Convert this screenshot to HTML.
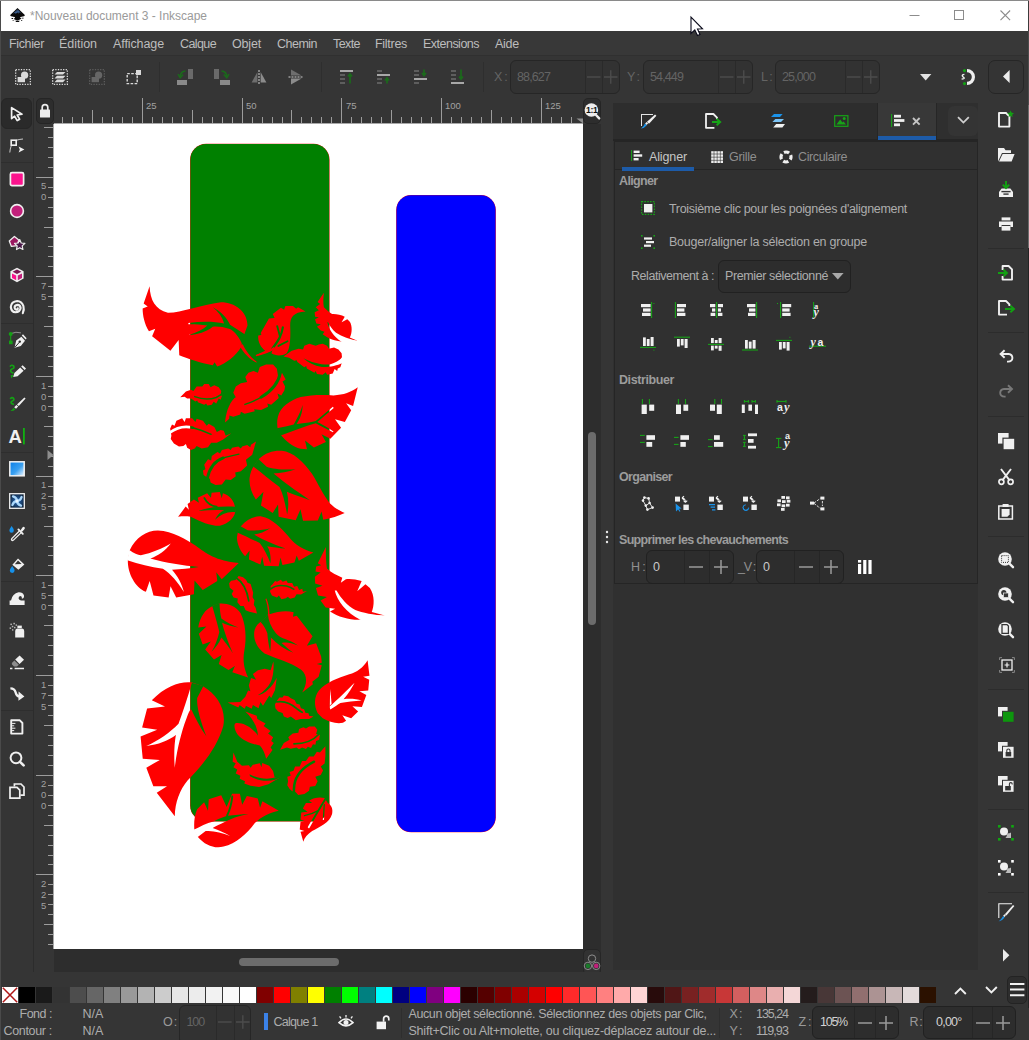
<!DOCTYPE html>
<html lang="fr"><head><meta charset="utf-8"><title>*Nouveau document 3 - Inkscape</title><style>
html,body{margin:0;padding:0}
body{width:1029px;height:1040px;position:relative;overflow:hidden;background:#353535;font-family:"Liberation Sans",sans-serif;font-size:12px;color:#b6b6b6}
.a{position:absolute;box-sizing:border-box}
.t{position:absolute;white-space:nowrap;line-height:16px;height:16px}
svg{overflow:visible}
.sb{border:1px solid #212121;border-radius:5px;background:#2d2d2d}
</style></head><body>
<div class="a" style="left:0px;top:0px;width:1029px;height:31px;background:#ffffff;"></div><div class="a" style="left:0px;top:0px;width:1029px;height:1px;background:#8a8a8a;"></div><div class="a" style="left:0px;top:1px;width:1px;height:1039px;background:#4a4a4a;"></div><svg class="a" style="left:8.5px;top:6.5px;" width="17" height="16" viewBox="0 0 22 21">
<defs><linearGradient id="lg1" x1="0" y1="0" x2="1" y2="1"><stop offset="0" stop-color="#111"/><stop offset=".55" stop-color="#3a5f92"/><stop offset="1" stop-color="#111"/></linearGradient></defs>
<path d="M11 1.2 L20.3 10.2 Q21.2 11.6 19.4 12.2 L15 13 Q13.6 13.6 15 14.6 L16.2 15.4 Q12 17.6 11 17.6 Q9 17.4 6 15.6 L7.4 14.4 Q8.6 13.4 7 13 L2.6 12.2 Q.8 11.6 1.8 10.2 Z" fill="#0b0b0b"/>
<path d="M11 3 L16.5 8.4 L13.5 7.6 L12.4 9 L10.8 7.2 L9 8.8 L7.2 7.8 L5 8.6 Z" fill="url(#lg1)"/>
<path d="M8 18.2 h6 l-1.2 1.5 h-3.6z M3.2 14.6 h2 v1 h-2z M16.6 14.2 h2.4 v.9 h-2.4z M4.4 17 h2.2 v.8 h-2.2z M15.6 17.2 h1.6 v.8 h-1.6z" fill="#0b0b0b"/>
</svg><span class="t" id="t0" style="left:30px;top:7.5px;font-size:12px;color:#9a9a9a;letter-spacing:-0.015px;">*Nouveau document 3 - Inkscape</span><svg class="a" style="left:909px;top:10px;" width="12" height="12" viewBox="0 0 12 12"><path d="M0.5 5.5h10" stroke="#8c8c8c" stroke-width="1"/></svg><svg class="a" style="left:954px;top:10px;" width="12" height="12" viewBox="0 0 12 12"><rect x="0.5" y="0.5" width="9" height="9" fill="none" stroke="#8c8c8c" stroke-width="1"/></svg><svg class="a" style="left:1000px;top:10px;" width="12" height="12" viewBox="0 0 12 12"><path d="M0.5 0.5l9.6 9.6M10.1 0.5l-9.6 9.6" stroke="#8c8c8c" stroke-width="1.1"/></svg><div class="a" style="left:1px;top:31px;width:1028px;height:25px;background:#383838;"></div><div class="a" style="left:1px;top:55px;width:1028px;height:1px;background:#303030;"></div><span class="t" id="t1" style="left:9px;top:35.5px;font-size:12.5px;color:#bdbdbd;letter-spacing:-0.359px;">Fichier</span><span class="t" id="t2" style="left:59px;top:35.5px;font-size:12.5px;color:#bdbdbd;letter-spacing:-0.033px;">Édition</span><span class="t" id="t3" style="left:113px;top:35.5px;font-size:12.5px;color:#bdbdbd;letter-spacing:-0.101px;">Affichage</span><span class="t" id="t4" style="left:180px;top:35.5px;font-size:12.5px;color:#bdbdbd;letter-spacing:-0.604px;">Calque</span><span class="t" id="t5" style="left:232px;top:35.5px;font-size:12.5px;color:#bdbdbd;letter-spacing:-0.178px;">Objet</span><span class="t" id="t6" style="left:277px;top:35.5px;font-size:12.5px;color:#bdbdbd;letter-spacing:-0.513px;">Chemin</span><span class="t" id="t7" style="left:333px;top:35.5px;font-size:12.5px;color:#bdbdbd;letter-spacing:-0.578px;">Texte</span><span class="t" id="t8" style="left:375px;top:35.5px;font-size:12.5px;color:#bdbdbd;letter-spacing:-0.290px;">Filtres</span><span class="t" id="t9" style="left:423px;top:35.5px;font-size:12.5px;color:#bdbdbd;letter-spacing:-0.516px;">Extensions</span><span class="t" id="t10" style="left:495px;top:35.5px;font-size:12.5px;color:#bdbdbd;letter-spacing:-0.258px;">Aide</span><div class="a" style="left:1px;top:56px;width:1028px;height:41px;background:#353535;"></div><svg class="a" style="left:15px;top:69px;" width="16" height="16" viewBox="0 0 16 16"><rect x="0.65" y="0.65" width="14.7" height="14.7" fill="none" stroke="#d9d9d9" stroke-width="1.3" stroke-dasharray="1.3 1.3"/><circle cx="9.6" cy="6.2" r="3.6" fill="#d9d9d9"/><rect x="2.6" y="8" width="7.4" height="5.2" fill="#d9d9d9"/></svg><svg class="a" style="left:52px;top:69px;" width="16" height="16" viewBox="0 0 16 16"><rect x="0.65" y="0.65" width="14.7" height="14.7" fill="none" stroke="#d9d9d9" stroke-width="1.3" stroke-dasharray="1.3 1.3"/><path d="M5 3 h8.5 l-2.5 2.6 h-8.5z M5 6.8 h8.5 l-2.5 2.6 h-8.5z M5 10.6 h8.5 l-2.5 2.6 h-8.5z" fill="#d9d9d9"/></svg><svg class="a" style="left:89px;top:69px;" width="16" height="16" viewBox="0 0 16 16"><rect x="0.65" y="0.65" width="14.7" height="14.7" fill="none" stroke="#5c5c5c" stroke-width="1.3" stroke-dasharray="1.3 1.3"/><circle cx="9.6" cy="6.2" r="3.6" fill="#666"/><rect x="2.6" y="8" width="7.4" height="5.2" fill="#666"/></svg><svg class="a" style="left:126px;top:69px;" width="16" height="16" viewBox="0 0 16 16"><rect x="1.2" y="4.6" width="10" height="10" fill="none" stroke="#d9d9d9" stroke-width="1.4" stroke-dasharray="2.6 1.4"/><rect x="10" y="1" width="5" height="5" fill="#d9d9d9"/></svg><div class="a" style="left:159px;top:62px;width:1px;height:30px;background:#2e2e2e;"></div><svg class="a" style="left:177px;top:69px;" width="16" height="16" viewBox="0 0 16 16"><rect x="11" y="0" width="5" height="10" fill="#6a6a6a"/><rect x="0" y="11" width="10" height="5" fill="#8a8a8a"/><path d="M8.5 2 Q3.5 2.5 3.2 7.6" fill="none" stroke="#1b6a1b" stroke-width="1.6"/><path d="M1 5.2 L3.2 8.8 L6.2 5.6" fill="none" stroke="#1b6a1b" stroke-width="1.5"/></svg><svg class="a" style="left:214px;top:69px;" width="16" height="16" viewBox="0 0 16 16"><rect x="0" y="0" width="5" height="10" fill="#6a6a6a"/><rect x="6" y="11" width="10" height="5" fill="#8a8a8a"/><path d="M7.5 2 Q12.5 2.5 12.8 7.6" fill="none" stroke="#1b6a1b" stroke-width="1.6"/><path d="M15 5.2 L12.8 8.8 L9.8 5.6" fill="none" stroke="#1b6a1b" stroke-width="1.5"/></svg><svg class="a" style="left:251px;top:69px;" width="16" height="16" viewBox="0 0 16 16"><path d="M6.4 3 V13.6 H0.6z" fill="#6e6e6e"/><path d="M9.6 3 V13.6 H15.4z" fill="#8c8c8c"/><path d="M8 1 V16" stroke="#d0d0d0" stroke-width="1" stroke-dasharray="2 1"/></svg><svg class="a" style="left:288px;top:69px;" width="16" height="16" viewBox="0 0 16 16"><path d="M3 6.4 H13.6 L3 0.6z" fill="#6e6e6e"/><path d="M3 9.6 H13.6 L3 15.4z" fill="#8c8c8c"/><path d="M0.5 8 H15.5" stroke="#d0d0d0" stroke-width="1" stroke-dasharray="2 1"/></svg><div class="a" style="left:321px;top:62px;width:1px;height:30px;background:#2e2e2e;"></div><svg class="a" style="left:340px;top:69px;" width="14" height="16" viewBox="0 0 14 16"><rect x="0" y="1" width="13" height="2" fill="#a8a8a8"/><rect x="0" y="5" width="5" height="2" fill="#5e5e5e" /><rect x="0" y="9" width="5" height="2" fill="#5e5e5e" /><rect x="0" y="13" width="5" height="2" fill="#5e5e5e" /><path d="M10 14.5 V5.5 M8 7.6 L10 5 L12 7.6" stroke="#1b6a1b" stroke-width="1.7" fill="none"/></svg><svg class="a" style="left:377px;top:69px;" width="14" height="16" viewBox="0 0 14 16"><rect x="0" y="1" width="5" height="2" fill="#5e5e5e" /><rect x="0" y="5" width="13" height="2" fill="#a8a8a8"/><rect x="0" y="9" width="5" height="2" fill="#5e5e5e" /><rect x="0" y="13" width="5" height="2" fill="#5e5e5e" /><path d="M10 14.5 V9.5 M8 11.6 L10 9 L12 11.6" stroke="#1b6a1b" stroke-width="1.7" fill="none"/></svg><svg class="a" style="left:414px;top:69px;" width="14" height="16" viewBox="0 0 14 16"><rect x="0" y="1" width="5" height="2" fill="#5e5e5e" /><rect x="0" y="5" width="5" height="2" fill="#5e5e5e" /><rect x="0" y="9" width="13" height="2" fill="#a8a8a8"/><rect x="0" y="13" width="5" height="2" fill="#5e5e5e" /><path d="M10 0.5 V6 M8 4 L10 6.6 L12 4" stroke="#1b6a1b" stroke-width="1.7" fill="none"/></svg><svg class="a" style="left:451px;top:69px;" width="14" height="16" viewBox="0 0 14 16"><rect x="0" y="1" width="5" height="2" fill="#5e5e5e" /><rect x="0" y="5" width="5" height="2" fill="#5e5e5e" /><rect x="0" y="9" width="5" height="2" fill="#5e5e5e" /><rect x="0" y="13" width="13" height="2" fill="#a8a8a8"/><path d="M10 0.5 V9.5 M8 7.4 L10 10 L12 7.4" stroke="#1b6a1b" stroke-width="1.7" fill="none"/></svg><div class="a" style="left:483px;top:62px;width:1px;height:30px;background:#2e2e2e;"></div><span class="t" id="t11" style="left:494px;top:68.5px;font-size:12.5px;color:#646464;letter-spacing:-0.766px;">X :</span><div class="a" style="left:510px;top:60px;width:110px;height:34px;border:1px solid #262626;border-radius:6px;background:#323232"></div><div class="a" style="left:585px;top:61px;width:1px;height:32px;background:#2a2a2a;"></div><div class="a" style="left:602px;top:61px;width:1px;height:32px;background:#2a2a2a;"></div><span class="t" id="t12" style="left:517px;top:68.5px;font-size:12.5px;color:#646464;letter-spacing:-0.872px;">88,627</span><svg class="a" style="left:587px;top:69px;" width="14" height="16" viewBox="0 0 14 16"><path d="M0 8 H13.5" stroke="#4c4c4c" stroke-width="1.4"/></svg><svg class="a" style="left:604px;top:69px;" width="14" height="16" viewBox="0 0 14 16"><path d="M0 8 H13.5 M6.75 1.2 V14.8" stroke="#4c4c4c" stroke-width="1.4"/></svg><span class="t" id="t13" style="left:627px;top:68.5px;font-size:12.5px;color:#646464;letter-spacing:-1.021px;">Y :</span><div class="a" style="left:643px;top:60px;width:110px;height:34px;border:1px solid #262626;border-radius:6px;background:#323232"></div><div class="a" style="left:718px;top:61px;width:1px;height:32px;background:#2a2a2a;"></div><div class="a" style="left:735px;top:61px;width:1px;height:32px;background:#2a2a2a;"></div><span class="t" id="t14" style="left:650px;top:68.5px;font-size:12.5px;color:#646464;letter-spacing:-0.872px;">54,449</span><svg class="a" style="left:720px;top:69px;" width="14" height="16" viewBox="0 0 14 16"><path d="M0 8 H13.5" stroke="#4c4c4c" stroke-width="1.4"/></svg><svg class="a" style="left:737px;top:69px;" width="14" height="16" viewBox="0 0 14 16"><path d="M0 8 H13.5 M6.75 1.2 V14.8" stroke="#4c4c4c" stroke-width="1.4"/></svg><span class="t" id="t15" style="left:761px;top:68.5px;font-size:12.5px;color:#646464;letter-spacing:-0.812px;">L :</span><div class="a" style="left:775px;top:60px;width:105px;height:34px;border:1px solid #262626;border-radius:6px;background:#323232"></div><div class="a" style="left:845px;top:61px;width:1px;height:32px;background:#2a2a2a;"></div><div class="a" style="left:862px;top:61px;width:1px;height:32px;background:#2a2a2a;"></div><span class="t" id="t16" style="left:782px;top:68.5px;font-size:12.5px;color:#646464;letter-spacing:-0.872px;">25,000</span><svg class="a" style="left:847px;top:69px;" width="14" height="16" viewBox="0 0 14 16"><path d="M0 8 H13.5" stroke="#4c4c4c" stroke-width="1.4"/></svg><svg class="a" style="left:864px;top:69px;" width="14" height="16" viewBox="0 0 14 16"><path d="M0 8 H13.5 M6.75 1.2 V14.8" stroke="#4c4c4c" stroke-width="1.4"/></svg><svg class="a" style="left:920px;top:74px;" width="12" height="7" viewBox="0 0 12 7"><path d="M0 0 H11.4 L5.7 6.4z" fill="#e4e4e4"/></svg><svg class="a" style="left:960px;top:68px;" width="18" height="18" viewBox="0 0 18 18"><path d="M7 2.6 A6.4 6.4 0 0 1 7 15.4" fill="none" stroke="#efefef" stroke-width="3.2"/><circle cx="4.5" cy="2.6" r="1.6" fill="#12a012"/><circle cx="4.5" cy="15.6" r="1.6" fill="#12a012"/><path d="M4.4 6.4 Q1.6 6.6 2.4 8.2 Q3 9.2 4 9.6 Q5 10.6 1.6 11.2" fill="none" stroke="#efefef" stroke-width="1.3"/></svg><div class="a" style="left:988px;top:60px;width:36px;height:34px;border:1px solid #262626;border-radius:7px;background:#343434"></div><svg class="a" style="left:1003px;top:70px;" width="7" height="14" viewBox="0 0 7 14"><path d="M6.6 0 V13 L0 6.5z" fill="#ececec"/></svg><div class="a" style="left:33px;top:98px;width:1px;height:877px;background:#2c2c2c;"></div><div class="a" style="left:1px;top:98px;width:31px;height:31px;border-radius:6px;background:#2a2a2a;border:1px solid #262626"></div><svg class="a" style="left:10px;top:106px;" width="15" height="16" viewBox="0 0 15 16"><path d="M1.6 1.6 L1.6 12.6 L4.6 10.2 L7.2 14.6 L9.6 13.2 L7.2 9 L12 8.2 Z" fill="none" stroke="#f0f0f0" stroke-width="1.7" stroke-linejoin="round"/></svg><svg class="a" style="left:9px;top:138px;" width="16" height="16" viewBox="0 0 16 16"><rect x="2.2" y="2.2" width="5" height="5" fill="none" stroke="#f0f0f0" stroke-width="1.6"/><path d="M7.5 2.2 Q11 1.2 14 1" stroke="#f0f0f0" stroke-width=".8" fill="none"/><path d="M2.3 7.6 Q1 11 .8 14.5" stroke="#f0f0f0" stroke-width=".8" fill="none"/><path d="M9.6 8.6 L15.4 11.4 L9.6 14.6 L10.8 11.5z" fill="#f0f0f0"/></svg><div class="a" style="left:1px;top:162px;width:32px;height:1px;background:#2e2e2e;"></div><svg class="a" style="left:9px;top:171px;" width="16" height="16" viewBox="0 0 16 16"><rect x="1.4" y="1.6" width="13.2" height="13" rx="1.6" fill="#fb138d" stroke="#f0f0f0" stroke-width="1.7"/></svg><svg class="a" style="left:9px;top:203px;" width="16" height="16" viewBox="0 0 16 16"><circle cx="8" cy="8" r="6.4" fill="#c2207b" stroke="#f0f0f0" stroke-width="1.6"/></svg><svg class="a" style="left:9px;top:235px;" width="16" height="16" viewBox="0 0 16 16"><path d="M5.4 1.5 L9.8 4.9 L8.1 10.7 L2.4 11.4 L.3 5.9z" fill="#9a1860" stroke="#f0f0f0" stroke-width="1.3" stroke-linejoin="round"/><path d="M10.7 4.6 L12.2 8 L15.9 8.4 L13.2 10.9 L13.9 14.5 L10.7 12.7 L7.5 14.5 L8.2 10.9 L5.5 8.4 L9.2 8z" fill="#4a1848" stroke="#f0f0f0" stroke-width="1.2" stroke-linejoin="round"/></svg><svg class="a" style="left:9px;top:267px;" width="16" height="16" viewBox="0 0 16 16"><path d="M8 .8 L14.6 4.2 V11.6 L8 15.2 L1.4 11.6 V4.2z" fill="#f0f0f0"/><path d="M8 2.6 L12.4 4.8 L8 7 L3.6 4.8z" fill="#7a1450"/><path d="M3 6.4 L7.2 8.6 V13.2 L3 10.9z" fill="#fb138d"/><path d="M13 6.4 L8.8 8.6 V13.2 L13 10.9z" fill="#c2207b"/></svg><svg class="a" style="left:9px;top:299px;" width="16" height="16" viewBox="0 0 16 16"><path d="M13.8 14.2 Q15.4 10.4 14.4 7 Q12.6 2.2 8.2 2 Q2.2 2.6 1.8 8 Q2.4 13 6.4 13.2 Q11 13 11.6 9 Q11.2 6 8.6 5.9 Q5.4 6.4 5.6 8.6 Q6 10.6 7.6 10.6 Q9 10.4 8.8 9.2" fill="none" stroke="#f0f0f0" stroke-width="2.1" stroke-linecap="round"/></svg><div class="a" style="left:1px;top:323px;width:32px;height:1px;background:#2e2e2e;"></div><svg class="a" style="left:9px;top:332px;" width="16" height="16" viewBox="0 0 16 16"><path d="M1.7 1.7 Q7 -.8 12 .9" fill="none" stroke="#9a9a9a" stroke-width=".9"/><path d="M1.7 3 V9" stroke="#15a015" stroke-width="1.1"/><circle cx="1.7" cy="1.9" r="2" fill="#15a015"/><rect x="0" y="8.6" width="3.6" height="3.6" fill="#15a015"/><path d="M5.6 15.8 L7.2 8.6 L12.4 4.8 L16 8.8 L11.8 14z" fill="#f0f0f0"/><path d="M12.8 3.4 L14 2.2 L17.6 6.2 L16.6 7.4z" fill="#f0f0f0"/><path d="M6 15.2 L10.6 10" stroke="#2c2c2c" stroke-width="1"/><circle cx="10.8" cy="9.6" r="1.2" fill="#2c2c2c"/></svg><svg class="a" style="left:9px;top:364px;" width="16" height="16" viewBox="0 0 16 16"><path d="M1 2.6 Q2.6 .2 4.6 2 Q5.8 3.8 3.4 4.8 Q.8 5.8 2 7.8 Q3 9.2 4.6 8.8" fill="none" stroke="#15a015" stroke-width="1.7"/><path d="M1.6 11.2 L5 10.8 L2.4 14.6z" fill="#15a015"/><path d="M4.2 13 L5.4 9 L11.2 3.4 L14.6 6.8 L8.6 12.2z" fill="#f0f0f0"/><path d="M12.2 2.6 L13.6 1.2 L17 4.6 L15.6 6z" fill="#f0f0f0"/></svg><svg class="a" style="left:9px;top:396px;" width="16" height="16" viewBox="0 0 16 16"><path d="M1.2 3 Q3 .6 4.6 2.4 Q5.6 4.2 3.4 5 Q1.4 5.8 2.6 7.4 Q3.6 8.4 5 8" fill="none" stroke="#15a015" stroke-width="1.7"/><path d="M15.4 1.4 L16.6 2.6 L9.8 10 L8 8.4z" fill="#f0f0f0"/><path d="M7.4 9 L9.2 10.6 L7 12.8 L5.2 11.2z" fill="#f0f0f0"/><path d="M4.6 11.8 L6.4 13.4 Q4.4 15.2 1.4 15 Q3.6 13.8 4.6 11.8z" fill="#15a015"/></svg><svg class="a" style="left:8px;top:428px;" width="20" height="18" viewBox="0 0 20 18"><text x=".6" y="15.2" font-size="18.5" font-weight="700" fill="#f0f0f0" font-family="Liberation Sans,sans-serif">A</text><rect x="15" y="0" width="1.8" height="16.4" fill="#11b011"/></svg><div class="a" style="left:1px;top:452px;width:32px;height:1px;background:#2e2e2e;"></div><svg class="a" style="left:9px;top:461px;" width="16" height="16" viewBox="0 0 16 16"><defs><linearGradient id="g2" x1="0" y1="0" x2="1" y2="1"><stop offset="0" stop-color="#0a7ee6"/><stop offset=".55" stop-color="#3aa0f0"/><stop offset="1" stop-color="#f4f9ff"/></linearGradient></defs><rect x=".8" y=".8" width="14.4" height="14" fill="url(#g2)" stroke="#f0f0f0" stroke-width="1.5"/></svg><svg class="a" style="left:9px;top:493px;" width="16" height="16" viewBox="0 0 16 16"><defs><radialGradient id="mg" cx=".5" cy=".5" r=".6"><stop offset="0" stop-color="#2a6fc0"/><stop offset="1" stop-color="#0b1c30"/></radialGradient></defs><rect x=".7" y=".7" width="14.6" height="14.6" fill="url(#mg)" stroke="#f0f0f0" stroke-width="1.3"/><g fill="none" stroke="#a8d6fb" stroke-width="2.3" stroke-linecap="round"><path d="M8 8 Q7.6 4.4 4 3.4"/><path d="M8 8 Q11.6 7.6 12.6 4"/><path d="M8 8 Q8.4 11.6 12 12.6"/><path d="M8 8 Q4.4 8.4 3.4 12"/></g><circle cx="8" cy="8" r="1.6" fill="#e8f4ff"/></svg><svg class="a" style="left:9px;top:525px;" width="16" height="16" viewBox="0 0 16 16"><path d="M2.6 1 Q5 4 4.8 5.6 A2.2 2.2 0 0 1 .4 5.6 Q.4 4 2.6 1z" fill="#1691ea"/><path d="M10.4 6 L3 13.4 Q2 14.8 3 15.4 Q4 15.8 5 14.6 L12.2 7.6" fill="none" stroke="#f0f0f0" stroke-width="1.3"/><path d="M9.4 4.4 L13.8 8.8" stroke="#f0f0f0" stroke-width="1.9" stroke-linecap="round"/><path d="M11.4 5.6 L13.4 2.4 Q14.6 1 15.6 2.2 Q16.4 3.2 15.2 4.4 L12.8 7z" fill="#f0f0f0"/></svg><svg class="a" style="left:9px;top:557px;" width="16" height="16" viewBox="0 0 16 16"><path d="M9 1.4 L15.4 7.6 L9.4 12.8 L3.4 7.8z" fill="#f0f0f0"/><path d="M9 3.6 L12.6 7 L5.8 7.2z" fill="#353535"/><path d="M3.2 9 Q5.8 12.2 5.6 13.6 A2.4 2.4 0 0 1 .8 13.6 Q.8 12.2 3.2 9z" fill="#1691ea"/></svg><div class="a" style="left:1px;top:581px;width:32px;height:1px;background:#2e2e2e;"></div><svg class="a" style="left:9px;top:590px;" width="16" height="16" viewBox="0 0 16 16"><path d="M.6 15 V10.4 H2 Q3.4 3.4 9.6 2.2 Q13.8 2 15 5.4 Q15.4 8.4 12.8 8.6 Q13.4 6.2 11.4 6 Q9.4 6.4 9.6 8.6 Q10 10.2 12 10.4 H15.6 V15z" fill="#f0f0f0"/></svg><svg class="a" style="left:9px;top:622px;" width="16" height="16" viewBox="0 0 16 16"><path d="M6.2 9 Q6.2 7 8.2 6.6 H13.2 Q15.2 7 15.2 9 V15.4 H6.2z" fill="#f0f0f0"/><rect x="8.4" y="3.6" width="4.4" height="2.4" fill="#f0f0f0"/><g fill="#b8b8b8"><rect x="1.4" y="1.6" width="1.5" height="1.5"/><rect x="4.4" y=".8" width="1.5" height="1.5"/><rect x="2.8" y="3.8" width="1.5" height="1.5"/><rect x=".6" y="5.4" width="1.5" height="1.5"/><rect x="5" y="4.8" width="1.5" height="1.5"/><rect x="6.6" y="2.4" width="1.4" height="1.4"/><rect x="3" y="7.2" width="1.4" height="1.4"/></g></svg><svg class="a" style="left:9px;top:654px;" width="16" height="16" viewBox="0 0 16 16"><path d="M10.6 1.4 L15 5.8 L10.6 10 L6.2 5.6z" fill="#f0f0f0"/><path d="M5.4 6.4 L9.8 10.8 L8 12.4 H5 L3 10.4 Q2.4 9.4 3.4 8.4z" fill="#8e8e8e"/><path d="M1 14.4 H3.4 M5.6 14.4 H15" stroke="#f0f0f0" stroke-width="1.5"/></svg><svg class="a" style="left:9px;top:686px;" width="16" height="16" viewBox="0 0 16 16"><path d="M1.4 2.4 Q5.6 2.4 6.6 6.4 Q7.6 10.4 11 10.6" fill="none" stroke="#f0f0f0" stroke-width="2.3"/><path d="M9.6 5.6 L15.4 10.4 L9.4 14.8z" fill="#f0f0f0"/></svg><div class="a" style="left:1px;top:710px;width:32px;height:1px;background:#2e2e2e;"></div><svg class="a" style="left:9px;top:719px;" width="16" height="16" viewBox="0 0 16 16"><path d="M2.2 1.2 H10.6 L13.4 4 V14.6 H2.2z" fill="none" stroke="#f0f0f0" stroke-width="1.9" stroke-linejoin="round"/><path d="M3 4.4 h3.4 M3 6.8 h2.2 M3 9.2 h3.4 M3 11.6 h2.2" stroke="#f0f0f0" stroke-width="1"/></svg><svg class="a" style="left:9px;top:751px;" width="16" height="16" viewBox="0 0 16 16"><circle cx="7" cy="6.8" r="5.4" fill="none" stroke="#f0f0f0" stroke-width="2"/><path d="M11 10.8 L14.6 14.4" stroke="#f0f0f0" stroke-width="2.6" stroke-linecap="round"/></svg><svg class="a" style="left:9px;top:783px;" width="16" height="16" viewBox="0 0 16 16"><path d="M5.4 3.6 V1 H12 L15 4 V12.2 H11.4" fill="none" stroke="#f0f0f0" stroke-width="1.7"/><path d="M1 4.4 H8 L10.8 7.2 V15.2 H1z" fill="none" stroke="#f0f0f0" stroke-width="1.7"/></svg><div class="a" style="left:36px;top:98px;width:18px;height:26px;border-radius:5px;background:#2d2d2d;border:1px solid #252525"></div><svg class="a" style="left:40px;top:103px;" width="10" height="15" viewBox="0 0 10 15"><rect x="0" y="6.6" width="10" height="8" rx=".6" fill="#ededed"/><path d="M2.2 7 V4.4 A2.8 2.8 0 0 1 7.8 4.4 V7" fill="none" stroke="#ededed" stroke-width="1.7"/></svg><svg class="a" style="left:0px;top:97px;" width="583" height="27" viewBox="0 0 583 27"><g stroke="#9c9c9c" stroke-width="1" shape-rendering="crispEdges"><path d="M62.5 19.5 V27"/><path d="M72.5 19.5 V27"/><path d="M82.5 19.5 V27"/><path d="M92.5 13 V27"/><path d="M102.5 19.5 V27"/><path d="M112.5 19.5 V27"/><path d="M122.5 19.5 V27"/><path d="M132.5 19.5 V27"/><path d="M142.5 1 V27"/><path d="M152.5 19.5 V27"/><path d="M162.5 19.5 V27"/><path d="M172.5 19.5 V27"/><path d="M182.5 19.5 V27"/><path d="M192.5 13 V27"/><path d="M202.5 19.5 V27"/><path d="M212.5 19.5 V27"/><path d="M222.5 19.5 V27"/><path d="M232.5 19.5 V27"/><path d="M242.5 1 V27"/><path d="M252.5 19.5 V27"/><path d="M262.5 19.5 V27"/><path d="M272.5 19.5 V27"/><path d="M282.5 19.5 V27"/><path d="M291.5 13 V27"/><path d="M301.5 19.5 V27"/><path d="M311.5 19.5 V27"/><path d="M321.5 19.5 V27"/><path d="M331.5 19.5 V27"/><path d="M341.5 1 V27"/><path d="M351.5 19.5 V27"/><path d="M361.5 19.5 V27"/><path d="M371.5 19.5 V27"/><path d="M381.5 19.5 V27"/><path d="M391.5 13 V27"/><path d="M401.5 19.5 V27"/><path d="M411.5 19.5 V27"/><path d="M421.5 19.5 V27"/><path d="M431.5 19.5 V27"/><path d="M441.5 1 V27"/><path d="M451.5 19.5 V27"/><path d="M461.5 19.5 V27"/><path d="M471.5 19.5 V27"/><path d="M481.5 19.5 V27"/><path d="M491.5 13 V27"/><path d="M501.5 19.5 V27"/><path d="M511.5 19.5 V27"/><path d="M521.5 19.5 V27"/><path d="M531.5 19.5 V27"/><path d="M541.5 1 V27"/><path d="M551.5 19.5 V27"/><path d="M561.5 19.5 V27"/><path d="M571.5 19.5 V27"/></g><path d="M54 26.5 H583" stroke="#a8a8a8" stroke-width="1"/><path d="M576.5 21.5 h6.5 v5z" fill="#8e8e8e"/></svg><span class="t" id="t17" style="left:146px;top:97.8px;font-size:9.5px;color:#a2a2a2;">25</span><span class="t" id="t18" style="left:246px;top:97.8px;font-size:9.5px;color:#a2a2a2;">50</span><span class="t" id="t19" style="left:346px;top:97.8px;font-size:9.5px;color:#a2a2a2;">75</span><span class="t" id="t20" style="left:445px;top:97.8px;font-size:9.5px;color:#a2a2a2;">100</span><span class="t" id="t21" style="left:545px;top:97.8px;font-size:9.5px;color:#a2a2a2;">125</span><svg class="a" style="left:0px;top:0px;" width="54" height="948" viewBox="0 0 54 948"><g stroke="#9c9c9c" stroke-width="1" shape-rendering="crispEdges"><path d="M44 127.5 H54"/><path d="M48 137.5 H54"/><path d="M48 147.5 H54"/><path d="M48 157.5 H54"/><path d="M48 167.5 H54"/><path d="M36 177.5 H54"/><path d="M48 187.5 H54"/><path d="M48 197.5 H54"/><path d="M48 207.5 H54"/><path d="M48 217.5 H54"/><path d="M44 227.5 H54"/><path d="M48 237.5 H54"/><path d="M48 246.5 H54"/><path d="M48 256.5 H54"/><path d="M48 266.5 H54"/><path d="M36 276.5 H54"/><path d="M48 286.5 H54"/><path d="M48 296.5 H54"/><path d="M48 306.5 H54"/><path d="M48 316.5 H54"/><path d="M44 326.5 H54"/><path d="M48 336.5 H54"/><path d="M48 346.5 H54"/><path d="M48 356.5 H54"/><path d="M48 366.5 H54"/><path d="M36 376.5 H54"/><path d="M48 386.5 H54"/><path d="M48 396.5 H54"/><path d="M48 406.5 H54"/><path d="M48 416.5 H54"/><path d="M44 426.5 H54"/><path d="M48 436.5 H54"/><path d="M48 446.5 H54"/><path d="M48 456.5 H54"/><path d="M48 466.5 H54"/><path d="M36 476.5 H54"/><path d="M48 486.5 H54"/><path d="M48 496.5 H54"/><path d="M48 506.5 H54"/><path d="M48 516.5 H54"/><path d="M44 526.5 H54"/><path d="M48 536.5 H54"/><path d="M48 546.5 H54"/><path d="M48 555.5 H54"/><path d="M48 565.5 H54"/><path d="M36 575.5 H54"/><path d="M48 585.5 H54"/><path d="M48 595.5 H54"/><path d="M48 605.5 H54"/><path d="M48 615.5 H54"/><path d="M44 625.5 H54"/><path d="M48 635.5 H54"/><path d="M48 645.5 H54"/><path d="M48 655.5 H54"/><path d="M48 665.5 H54"/><path d="M36 675.5 H54"/><path d="M48 685.5 H54"/><path d="M48 695.5 H54"/><path d="M48 705.5 H54"/><path d="M48 715.5 H54"/><path d="M44 725.5 H54"/><path d="M48 735.5 H54"/><path d="M48 745.5 H54"/><path d="M48 755.5 H54"/><path d="M48 765.5 H54"/><path d="M36 775.5 H54"/><path d="M48 785.5 H54"/><path d="M48 795.5 H54"/><path d="M48 805.5 H54"/><path d="M48 815.5 H54"/><path d="M44 825.5 H54"/><path d="M48 835.5 H54"/><path d="M48 845.5 H54"/><path d="M48 855.5 H54"/><path d="M48 864.5 H54"/><path d="M36 874.5 H54"/><path d="M48 884.5 H54"/><path d="M48 894.5 H54"/><path d="M48 904.5 H54"/><path d="M48 914.5 H54"/><path d="M44 924.5 H54"/><path d="M48 934.5 H54"/><path d="M48 944.5 H54"/></g><path d="M53.5 124 V949" stroke="#a8a8a8" stroke-width="1"/><path d="M47.5 450 L53.5 455 L47.5 460z" fill="#8e8e8e"/></svg><span class="t" id="t22" style="left:41px;top:177.5px;font-size:9.5px;color:#a2a2a2;">5</span><span class="t" id="t23" style="left:41px;top:188.5px;font-size:9.5px;color:#a2a2a2;">0</span><span class="t" id="t24" style="left:41px;top:277.5px;font-size:9.5px;color:#a2a2a2;">7</span><span class="t" id="t25" style="left:41px;top:288.5px;font-size:9.5px;color:#a2a2a2;">5</span><span class="t" id="t26" style="left:41px;top:377.5px;font-size:9.5px;color:#a2a2a2;">1</span><span class="t" id="t27" style="left:41px;top:388.5px;font-size:9.5px;color:#a2a2a2;">0</span><span class="t" id="t28" style="left:41px;top:399.5px;font-size:9.5px;color:#a2a2a2;">0</span><span class="t" id="t29" style="left:41px;top:476.5px;font-size:9.5px;color:#a2a2a2;">1</span><span class="t" id="t30" style="left:41px;top:487.5px;font-size:9.5px;color:#a2a2a2;">2</span><span class="t" id="t31" style="left:41px;top:498.5px;font-size:9.5px;color:#a2a2a2;">5</span><span class="t" id="t32" style="left:41px;top:576.5px;font-size:9.5px;color:#a2a2a2;">1</span><span class="t" id="t33" style="left:41px;top:587.5px;font-size:9.5px;color:#a2a2a2;">5</span><span class="t" id="t34" style="left:41px;top:598.5px;font-size:9.5px;color:#a2a2a2;">0</span><span class="t" id="t35" style="left:41px;top:676.5px;font-size:9.5px;color:#a2a2a2;">1</span><span class="t" id="t36" style="left:41px;top:687.5px;font-size:9.5px;color:#a2a2a2;">7</span><span class="t" id="t37" style="left:41px;top:698.5px;font-size:9.5px;color:#a2a2a2;">5</span><span class="t" id="t38" style="left:41px;top:775.5px;font-size:9.5px;color:#a2a2a2;">2</span><span class="t" id="t39" style="left:41px;top:786.5px;font-size:9.5px;color:#a2a2a2;">0</span><span class="t" id="t40" style="left:41px;top:797.5px;font-size:9.5px;color:#a2a2a2;">0</span><span class="t" id="t41" style="left:41px;top:875.5px;font-size:9.5px;color:#a2a2a2;">2</span><span class="t" id="t42" style="left:41px;top:886.5px;font-size:9.5px;color:#a2a2a2;">2</span><span class="t" id="t43" style="left:41px;top:897.5px;font-size:9.5px;color:#a2a2a2;">5</span><div class="a" style="left:54px;top:124px;width:529px;height:825px;background:#ffffff;"></div><svg class="a" style="left:0px;top:0px;" width="1029" height="1040" viewBox="0 0 1029 1040">
<defs><mask id="vm" maskUnits="userSpaceOnUse" x="100" y="250" width="320" height="640"><rect x="100" y="250" width="320" height="640" fill="#fff"/><g fill="none" stroke="#000" stroke-linecap="round" stroke-linejoin="round"><g transform="translate(130 275) scale(0.12634)"><path d="M462,380 C560,367 660,365 745,384 C730,330 700,290 655,255 C720,288 768,340 792,394 C830,418 870,443 908,469 L945,492 L893,562 C870,500 830,447 790,428 C740,412 700,406 655,409 C600,452 540,470 465,474 C530,456 580,430 612,400 C560,392 510,388 462,389 Z" fill="#000" stroke="none"/></g><g transform="translate(250 280) scale(0.12634)"><path d="M260,375 C250,440 225,480 175,545" stroke-width="17.6"/><path d="M215,365 L237,445" stroke-width="14.9"/><path d="M297,485 L225,522" stroke-width="14.9"/><path d="M612,334 C625,392 662,448 724,489 L730,503 L853,503 L853,484 C791,469 730,452 681,418 C650,392 631,361 618,334 Z" fill="#000" stroke="none"/><path d="M422,619 C484,651 557,672 631,669 C668,660 705,638 730,614 L736,651 L727,658 C693,674 631,691 570,689 C508,678 459,651 422,619 Z" fill="#000" stroke="none"/></g><g transform="translate(160 360) scale(0.12634)"><path d="M275,290 C330,312 400,312 445,297 L487,272" stroke-width="12.2"/><path d="M672,352 C720,335 760,318 800,295" stroke-width="10.8"/><path d="M800,295 C860,260 935,195 953,100" stroke-width="23.0"/><path d="M76,576 C130,535 200,522 260,536" stroke-width="21.6"/><path d="M260,536 C320,552 370,572 405,588" stroke-width="10.8"/><path d="M374,940 C390,860 430,800 500,775" stroke-width="23.0"/><path d="M500,775 C550,760 590,752 625,745" stroke-width="10.8"/></g><g transform="translate(240 380) scale(0.12634)"><path d="M292,382 L370,366 L425,352 C455,300 480,250 496,198 C495,260 475,310 448,348 L545,336 L600,324 L735,211 L742,222 L612,333 C650,350 700,380 740,408 L736,414 C690,390 640,365 600,342 L545,358 L440,395 L322,440 Z" fill="#000" stroke="none"/></g><g transform="translate(230 440) scale(0.12634)"><path d="M225,150 L290,212 C340,232 430,238 520,232 C460,252 400,262 345,265 C420,330 520,400 632,476 C560,450 500,430 450,410 C465,470 465,530 452,590 C440,520 425,440 392,372 C320,320 250,260 184,210 Z" fill="#000" stroke="none"/><path d="M84,682 L140,715 C200,720 270,712 318,698 C280,725 230,742 190,748 C260,790 350,830 440,858 C390,855 340,848 295,840 C320,880 325,930 320,975 C300,920 270,860 235,815 C170,785 110,755 58,732 Z" fill="#000" stroke="none"/></g><g transform="translate(120 480) scale(0.12634)"><path d="M668,143 C690,185 720,205 765,212" stroke-width="14.9"/><path d="M620,245 C700,215 800,205 914,212 L914,255 C860,245 800,270 752,315 C770,275 800,250 825,240 C760,235 690,240 620,245 Z" fill="#000" stroke="none"/><path d="M74,554 C110,580 140,592 165,595 C250,580 340,540 402,503 C360,560 300,600 240,622 C360,655 500,680 625,688 C550,700 480,705 412,710 C455,760 490,820 506,886 C460,810 400,740 340,702 C240,690 150,665 58,636 Z" fill="#000" stroke="none"/></g><g transform="translate(265 540) scale(0.12634)"><path d="M43,388 C80,360 130,355 170,365 C200,372 215,382 228,390" stroke-width="12.2"/><path d="M552,400 C570,480 640,575 758,633 L770,655 L955,655 L955,601 C860,593 770,576 715,554 C650,520 600,460 566,400 Z" fill="#000" stroke="none"/></g><g transform="translate(190 570) scale(0.12634)"><path d="M362,60 C410,90 450,150 465,245" stroke-width="13.5"/><path d="M176,285 L234,262 C235,310 240,350 248,384 C290,415 340,440 382,456 C330,447 290,435 254,418 C265,470 300,570 340,660 C300,600 270,560 248,535 C230,580 200,620 170,648 C200,600 220,540 232,490 C215,420 195,350 176,285 Z" fill="#000" stroke="none"/><path d="M560,414 L617,352 C620,400 640,450 680,500 C720,550 790,545 855,598 C800,575 760,570 725,578 C760,610 790,635 818,655 C750,630 690,590 640,535 C640,570 640,610 635,645 C625,600 615,550 612,500 C600,470 585,440 560,414 Z" fill="#000" stroke="none"/></g><g transform="translate(215 640) scale(0.12634)"><path d="M488,490 C540,480 600,500 650,545 C670,560 680,568 690,572" stroke-width="13.5"/><path d="M625,822 C700,822 770,805 822,746" stroke-width="13.5"/></g><g transform="translate(300 640) scale(0.12634)"><path d="M232,528 C300,470 380,390 432,338 C400,400 370,440 345,468 C400,462 450,468 488,478 C430,482 370,488 320,498 C300,510 270,530 240,550 Z" fill="#000" stroke="none"/><path d="M240,388 L250,505 L234,522 Z" fill="#000" stroke="none"/></g><g transform="translate(130 670) scale(0.15550)"><path d="M768,670 C820,698 880,706 932,692 L976,680 L980,686 C930,712 860,730 772,684 Z" fill="#000" stroke="none"/><path d="M398,82 C370,180 340,270 312,345 C260,400 180,455 105,488 C180,482 250,452 295,418 C284,480 282,560 288,628 C300,520 330,400 360,320 C375,280 388,240 396,258 C420,310 450,370 492,428 C440,290 430,230 432,180 L472,103 Z" fill="#000" stroke="none"/></g><g transform="translate(180 730) scale(0.15550)"><path d="M303,550 C322,510 332,470 336,428" stroke-width="12.2"/><path d="M936,442 C900,500 865,560 828,625" stroke-width="12.2"/><path d="M885,520 C860,535 830,545 800,550" stroke-width="8.1"/><path d="M922,575 C925,540 925,510 928,480" stroke-width="8.1"/><path d="M733,397 C728,320 770,250 862,204" stroke-width="16.2"/><path d="M88,642 C130,620 170,600 215,588 C250,572 280,560 305,552 C350,545 400,542 440,540 C380,552 330,568 290,590 C260,605 230,618 210,630 C250,645 290,662 322,682 C270,660 210,645 165,650 L112,690 Z" fill="#000" stroke="none"/></g></g></mask></defs>
<rect x="190.1" y="143.7" width="139.4" height="677.8" rx="16" fill="#ff0000"/>
<rect x="190.4" y="144" width="138.8" height="677.2" rx="15.7" fill="#008000"/>
<rect x="396.2" y="195" width="99.6" height="637.3" rx="15" fill="#ff0000"/>
<rect x="396.5" y="195.3" width="99" height="636.7" rx="14.7" fill="#0000ff"/>
<g fill="#ff0000" mask="url(#vm)"><g transform="translate(130 275) scale(0.12634)"><path d="M155,90 C160,200 200,275 300,298 C400,300 560,235 720,215 C830,215 930,290 930,400 L905,468 C885,520 885,560 880,570 C840,640 760,700 690,725 L670,690 L655,715 C560,695 450,660 390,635 L385,515 L320,600 L175,485 L200,425 L150,445 C115,390 100,320 100,265 L140,250 L108,225 Z"/></g><g transform="translate(250 280) scale(0.12634)"><path d="M440,250 L380,215 L365,228 L340,205 L280,205 L270,235 L245,220 L180,270 L195,300 L150,305 L85,420 L90,435 L65,440 C60,490 90,540 120,560 L45,595 L50,602 C100,585 150,570 178,552 L170,580 C200,600 250,605 290,580 C320,540 322,440 318,360 C318,300 340,255 440,250 Z"/><path d="M585,100 L535,175 L555,190 L520,215 L545,240 L512,255 L515,290 L545,295 L515,310 L525,345 L560,350 L530,370 L560,400 L590,410 L575,430 C620,465 680,485 725,487 L735,478 C770,470 810,475 850,480 L790,455 C810,420 810,360 790,330 L770,310 L725,335 L750,290 C720,275 680,268 650,270 C620,250 595,225 585,215 C578,180 580,140 585,100 Z"/><path d="M265,605 L330,560 L385,545 L420,550 L430,520 L470,505 L520,520 L545,510 L575,505 L610,520 L625,545 L665,535 L700,550 L725,580 L728,610 L715,640 L725,660 L715,690 L695,700 L690,720 L670,705 L655,740 L610,750 L600,730 L575,750 L530,745 L520,720 L510,735 L450,700 L445,680 L430,690 L375,650 L370,635 L350,640 L310,615 Z"/></g><g transform="translate(160 360) scale(0.12634)"><path d="M160,295 L205,250 L245,235 L265,245 L290,210 L335,210 L350,190 L385,190 L400,215 L430,200 L465,215 L485,245 L480,275 L490,285 L480,315 L465,305 L445,345 L425,330 L410,355 L375,360 L365,345 L350,355 L300,335 L295,320 L280,328 L245,305 L215,305 L195,290 Z"/><path d="M515,495 C520,430 540,350 590,300 L600,295 L580,260 L600,210 L640,185 L690,175 L675,135 L700,100 L740,88 L775,100 L790,55 L840,35 L895,35 L925,70 L935,130 L965,100 L995,155 L970,170 L990,210 L985,240 L960,280 L930,265 L940,300 L880,355 L850,345 L855,370 L800,395 L745,390 L750,405 L670,425 L640,410 L635,432 L580,450 L550,440 L548,465 Z"/><path d="M565,580 L520,600 L505,560 L480,555 L450,570 L430,530 L385,505 L370,520 L340,480 L290,465 L280,490 L255,462 L205,462 L195,490 L175,462 L130,480 L115,520 L95,510 L80,545 L85,565 L90,600 L85,625 L110,660 L150,685 L185,680 L205,665 L215,695 L245,712 L275,700 L290,680 L330,700 L380,690 L405,655 L450,655 L500,630 Z"/><path d="M760,645 L720,670 L715,690 L690,672 L650,685 L640,700 L620,685 L570,695 L560,712 L540,700 L490,712 L475,740 L455,728 L410,760 L405,795 L380,785 L350,830 L360,865 L340,875 L345,910 L365,925 L395,940 L400,970 L440,990 L490,985 L520,945 L560,950 L600,920 L595,890 L640,880 L690,835 L680,790 L730,750 Z"/></g><g transform="translate(240 380) scale(0.12634)"><path d="M932,58 C880,95 820,120 740,122 C650,115 560,118 480,135 C400,160 320,210 300,290 C290,330 295,360 298,383 L325,437 C360,480 420,530 480,545 L530,548 L515,478 L585,535 L680,490 L645,430 L715,465 L800,378 L752,310 L830,332 L880,240 L840,185 L895,205 Z"/></g><g transform="translate(230 440) scale(0.12634)"><path d="M230,148 C280,100 350,80 410,85 C500,95 580,170 650,270 C700,350 740,440 790,500 C830,540 870,560 908,578 C860,600 800,620 738,632 L725,565 L695,638 L578,640 L558,548 L520,635 L385,608 L380,510 L338,578 L245,518 L265,410 L205,470 C170,420 150,360 155,300 C160,260 175,225 188,207 Z"/><path d="M88,680 C130,630 190,600 250,605 C330,620 400,690 460,760 C520,840 590,870 660,890 L545,955 L528,915 L510,970 L415,990 L400,930 L385,1000 L270,995 L255,925 L240,985 L150,945 L155,875 L120,920 C80,880 55,820 55,770 L62,730 Z"/></g><g transform="translate(120 480) scale(0.12634)"><path d="M460,290 L520,210 L545,235 L535,190 L585,155 L625,180 L615,140 L690,105 L720,140 L725,100 L790,95 L805,145 L815,105 C870,120 905,170 910,215 L912,250 C910,290 860,350 790,362 C720,365 640,330 560,290 C520,285 490,287 460,290 Z"/><path d="M78,555 C120,460 210,400 300,400 C420,405 520,470 600,520 C680,580 760,640 940,657 L805,785 L762,730 L770,800 L655,870 L590,795 L585,905 L445,930 L400,840 L385,930 L265,915 L235,800 L205,885 C120,850 60,740 62,635 Z"/></g><g transform="translate(265 540) scale(0.12634)"><path d="M482,55 L418,185 L445,200 L405,210 L400,250 L440,258 L395,290 L397,345 L455,362 L403,380 L420,440 L490,452 L440,478 L480,535 L555,545 L515,565 C580,610 680,635 760,630 C800,600 870,590 948,598 L845,570 C865,520 870,440 830,380 L795,350 L730,405 L765,325 C720,310 670,305 640,310 L600,338 L612,298 C570,280 520,255 490,225 C483,170 480,110 482,55 Z"/><path d="M332,403 L300,410 L295,385 L270,395 L255,365 L230,370 L215,340 L180,340 L170,320 L140,330 L125,315 L95,330 L80,325 L60,350 L45,365 L45,380 L40,410 L55,440 L95,455 L110,440 L130,468 L165,462 L180,450 L200,465 L235,455 L250,430 L285,432 Z"/></g><g transform="translate(190 570) scale(0.12634)"><path d="M530,345 L470,330 L440,318 L425,285 L400,285 L375,255 L378,225 L345,218 L330,190 L345,165 L315,140 L310,105 L325,85 L360,80 L385,48 L420,58 L445,80 L455,100 L480,110 L490,145 L500,180 L495,215 L510,240 L505,275 L520,300 Z"/><path d="M180,285 L232,265 C290,260 360,280 400,340 C440,420 450,540 430,640 C415,720 430,790 460,850 L335,810 L355,760 L305,792 L228,745 L250,672 L190,708 L120,630 L165,565 L100,590 L70,505 L130,448 L65,455 C80,370 120,310 180,285 Z"/><path d="M605,225 C620,260 628,300 630,350 C700,325 770,320 820,335 L815,370 L845,362 L970,525 L925,600 L998,579 L1038,684 L1043,734 L1003,744 L1043,754 L1018,844 L968,884 L973,904 L888,969 C930,900 930,830 880,790 C800,730 680,700 590,660 C520,610 500,540 510,480 C520,440 545,415 572,405 L618,350 C616,300 610,260 597,229 Z"/></g><g transform="translate(215 640) scale(0.12634)"><path d="M462,170 C468,230 460,290 440,335 C420,375 385,410 338,438 C400,422 452,372 489,298 L475,395 L445,460 L430,440 L380,520 L360,490 L345,540 L300,515 L290,545 L245,520 L235,545 L195,515 L185,535 L100,495 L200,490 L240,450 L262,400 L280,405 L268,360 L285,300 L325,315 L300,270 L340,240 L395,228 L440,240 Z"/><path d="M780,605 L745,600 L740,580 L715,575 L705,548 L680,540 L670,510 L645,505 L630,475 L600,462 L580,445 L545,440 L535,455 L510,455 L488,482 L475,510 L478,540 L500,565 L535,578 L545,605 L575,618 L600,605 L640,635 L680,625 L745,625 Z"/><path d="M240,565 L330,600 L335,625 L400,660 L385,680 L440,720 L420,740 L460,770 L445,800 L465,815 L440,850 L455,870 L405,940 C395,900 380,860 355,835 C300,825 220,800 180,750 C150,710 150,670 160,660 C200,650 260,675 300,712 C320,730 335,745 340,758 C337,690 300,620 240,565 Z"/><path d="M515,868 L545,815 L590,790 L580,770 L615,740 L660,735 L665,705 L700,690 L720,700 L745,685 L790,685 L810,710 L800,745 L830,750 L825,790 L800,800 L795,830 L775,825 L760,855 L735,845 L720,862 L690,850 L665,865 L645,850 L600,860 L570,850 Z"/></g><g transform="translate(300 640) scale(0.12634)"><path d="M535,160 C500,220 450,255 390,272 C300,300 200,340 150,400 C110,450 110,520 140,580 L180,620 C230,650 290,665 340,655 L365,640 L335,595 L405,620 L460,565 L415,525 L490,530 L525,435 L470,405 L540,400 L548,315 L500,290 L550,282 Z"/></g><g transform="translate(130 670) scale(0.15550)"><path d="M400,80 C330,70 230,100 140,195 L225,235 L110,248 L78,370 L175,385 L68,428 L82,570 L192,578 L105,628 L150,748 L238,748 L172,790 L288,940 C290,850 320,770 370,710 C460,620 560,500 600,360 C620,250 560,160 470,105 Z"/><path d="M665,530 L660,590 L680,600 L665,625 L690,640 L680,665 L710,680 L705,700 L740,715 L735,730 L775,745 L830,752 L890,735 L975,685 L930,692 L920,650 L895,615 L850,598 L845,625 L835,600 L790,610 L775,628 L765,612 L720,615 L690,590 Z"/></g><g transform="translate(180 730) scale(0.15550)"><path d="M635,520 L530,458 L515,500 L500,440 L430,425 L400,480 L385,410 L335,410 L300,495 L265,420 L185,445 L180,520 L155,465 L110,510 C90,560 90,600 92,638 L115,688 C160,740 220,765 280,750 C360,730 430,670 480,600 C520,560 580,530 635,520 Z"/><path d="M793,718 L775,655 L800,650 L770,640 L775,590 L800,585 L775,575 L780,530 L820,525 L790,505 L810,470 L850,470 L830,455 C860,435 900,430 930,438 L950,470 C975,485 985,510 978,540 C960,600 900,620 850,650 C820,670 800,695 793,718 Z"/><path d="M935,105 L900,145 L880,140 L860,170 L830,170 L810,200 L785,200 L770,235 L740,235 L730,262 L705,270 L712,295 L690,300 L695,330 L690,355 L705,380 L720,392 L745,400 L760,418 L800,412 L830,390 L835,365 L870,360 L885,330 L870,300 L905,290 L920,260 L905,235 L930,215 L935,165 Z"/></g></g>
<g transform="translate(130 275) scale(0.12634)"><path d="M868,560 C900,620 950,670 1003,695 L1000,684 C955,650 915,600 893,548 Z" fill="#ff0000"/></g><g transform="translate(250 280) scale(0.12634)"><path d="M45,594 C100,574 150,558 188,530 L200,545 C150,577 100,592 50,603 Z" fill="#ff0000"/></g>
</svg><div class="a" style="left:583px;top:124px;width:18px;height:825px;background:#2d2d2d;"></div><div class="a" style="left:54px;top:949px;width:529px;height:26px;background:#2d2d2d;"></div><div class="a" style="left:583px;top:949px;width:18px;height:26px;background:#2d2d2d;"></div><div class="a" style="left:588px;top:432px;width:8px;height:193px;border-radius:4px;background:#6c6c6c"></div><div class="a" style="left:239px;top:958px;width:100px;height:8px;border-radius:4px;background:#6c6c6c"></div><div class="a" style="left:583px;top:98px;width:18px;height:26px;border-radius:5px;background:#2d2d2d;border:1px solid #252525"></div><svg class="a" style="left:584px;top:102px;" width="16" height="18" viewBox="0 0 16 18"><circle cx="7.4" cy="8" r="6.8" fill="#ededed"/><path d="M12 13 L15.2 16.4" stroke="#ededed" stroke-width="2.4" stroke-linecap="round"/><text x="7.7" y="11.3" font-size="9.5" font-weight="700" text-anchor="middle" fill="#111" font-family="Liberation Sans, sans-serif" letter-spacing="-.35" textLength="11.6" lengthAdjust="spacingAndGlyphs">1:1</text></svg><div class="a" style="left:583px;top:949px;width:18px;height:26px;border-radius:5px;background:#323232;border:1px solid #262626"></div><svg class="a" style="left:583px;top:953px;" width="18" height="18" viewBox="0 0 18 18"><circle cx="9" cy="5.6" r="3.7" fill="none" stroke="#8c8c8c" stroke-width="1"/><circle cx="4.9" cy="12.9" r="3.7" fill="none" stroke="#8c8c8c" stroke-width="1"/><circle cx="13.2" cy="12.9" r="3.7" fill="none" stroke="#8c8c8c" stroke-width="1"/><circle cx="4.9" cy="12.9" r="2.3" fill="#1a7a2a"/><circle cx="13.2" cy="12.9" r="2.3" fill="#c0207a"/></svg><svg class="a" style="left:604px;top:530px;" width="6" height="14" viewBox="0 0 6 14"><circle cx="3" cy="2" r="1.2" fill="#e8e8e8"/><circle cx="3" cy="7" r="1.2" fill="#e8e8e8"/><circle cx="3" cy="12" r="1.2" fill="#e8e8e8"/></svg><div class="a" style="left:613px;top:103px;width:365px;height:867px;background:#303030;"></div><div class="a" style="left:613px;top:103px;width:323px;height:37px;background:#2d2d2d;"></div><div class="a" style="left:936px;top:103px;width:42px;height:37px;background:#2f2f2f;"></div><div class="a" style="left:613px;top:139px;width:365px;height:2px;background:#252525;"></div><div class="a" style="left:878px;top:103px;width:58px;height:34px;background:#383838;"></div><div class="a" style="left:878px;top:136px;width:58px;height:4px;background:#1d5ba8;"></div><div class="a" style="left:877px;top:103px;width:1px;height:37px;background:#262626;"></div><div class="a" style="left:936px;top:103px;width:1px;height:37px;background:#262626;"></div><div class="a" style="left:948px;top:106px;width:30px;height:30px;border-radius:6px;background:#343434"></div><svg class="a" style="left:957px;top:116px;" width="13" height="9" viewBox="0 0 13 9"><path d="M1 1.2 L6.4 6.6 L11.8 1.2" fill="none" stroke="#cfcfcf" stroke-width="1.8"/></svg><svg class="a" style="left:640px;top:113px;" width="17" height="16" viewBox="0 0 17 16"><path d="M1.5 13 V1.5 H13.4" fill="none" stroke="#e4e4e4" stroke-width="1" shape-rendering="crispEdges"/><path d="M16.4 2.8 L9 10.8 L7 8.8 L15 1.4z" fill="#f0f0f0"/><path d="M7.4 9.6 L5.8 11.2" stroke="#f0f0f0" stroke-width="2"/><path d="M5 10.4 L6.8 12.2 Q4.6 15 1 15.6 Q3.8 13.4 5 10.4z" fill="#1a93ea"/></svg><svg class="a" style="left:705px;top:113px;" width="17" height="16" viewBox="0 0 17 16"><path d="M9.4 14.8 H1 V1 H8.4 L12 4.6 V6" fill="none" stroke="#f0f0f0" stroke-width="1.8" stroke-linejoin="round"/><path d="M7 9 H14 M11.6 5.8 L15.2 9 L11.6 12.2" fill="none" stroke="#17a317" stroke-width="1.9"/></svg><svg class="a" style="left:769px;top:114px;" width="17" height="15" viewBox="0 0 17 15"><path d="M5 0 H13.6 L11 3 H2z" fill="#1a93ea"/><path d="M6.4 5 H15 L12 8 H3.4z" fill="#7cc4f6"/><path d="M7.2 10 H16 L13.4 13.4 H4.2z" fill="#f0f0f0"/></svg><svg class="a" style="left:834px;top:115px;" width="15" height="12" viewBox="0 0 15 12"><rect x=".7" y=".7" width="13.2" height="10.6" fill="none" stroke="#17a317" stroke-width="1.2"/><path d="M2.4 9.6 L6.2 4.6 L8.4 7.4 L9.6 6.4 L12 9.6z" fill="#17a317"/><circle cx="10.2" cy="3.6" r="1.5" fill="#17a317"/></svg><svg class="a" style="left:890.5px;top:114px;" width="14" height="13" viewBox="0 0 14 13"><path d="M.6 0 V13" stroke="#17a317" stroke-width="1.1"/><rect x="3" y=".8" width="7" height="2.8" fill="#f0f0f0"/><rect x="3" y="5.1" width="10.4" height="2.8" fill="#f0f0f0"/><rect x="3" y="9.4" width="6" height="2.8" fill="#f0f0f0"/></svg><svg class="a" style="left:912px;top:117px;" width="9" height="9" viewBox="0 0 9 9"><path d="M1 1 L7.6 7.6 M7.6 1 L1 7.6" stroke="#c4c4c4" stroke-width="1.9"/></svg><div class="a" style="left:614px;top:141px;width:364px;height:443px;border:1px solid #252525;background:#303030"></div><div class="a" style="left:615px;top:169px;width:362px;height:1px;background:#252525;"></div><div class="a" style="left:622px;top:167px;width:72px;height:4px;background:#1d5ba8;"></div><svg class="a" style="left:631px;top:150px;" width="12" height="11" viewBox="0 0 12 11"><path d="M.6 0 V11" stroke="#17a317" stroke-width="1"/><rect x="2.6" y=".6" width="6" height="2.4" fill="#f0f0f0"/><rect x="2.6" y="4.3" width="8.6" height="2.4" fill="#f0f0f0"/><rect x="2.6" y="8" width="5" height="2.4" fill="#f0f0f0"/></svg><span class="t" id="t44" style="left:649px;top:149.0px;font-size:12.5px;color:#c6c6c6;letter-spacing:-0.132px;">Aligner</span><svg class="a" style="left:711px;top:150.5px;" width="13" height="13" viewBox="0 0 13 13"><rect x="0.2" y="0.2" width="2.5" height="2.5" fill="#ededed"/><rect x="0.2" y="3.3000000000000003" width="2.5" height="2.5" fill="#ededed"/><rect x="0.2" y="6.4" width="2.5" height="2.5" fill="#ededed"/><rect x="0.2" y="9.5" width="2.5" height="2.5" fill="#ededed"/><rect x="3.3000000000000003" y="0.2" width="2.5" height="2.5" fill="#ededed"/><rect x="3.3000000000000003" y="3.3000000000000003" width="2.5" height="2.5" fill="#ededed"/><rect x="3.3000000000000003" y="6.4" width="2.5" height="2.5" fill="#ededed"/><rect x="3.3000000000000003" y="9.5" width="2.5" height="2.5" fill="#ededed"/><rect x="6.4" y="0.2" width="2.5" height="2.5" fill="#ededed"/><rect x="6.4" y="3.3000000000000003" width="2.5" height="2.5" fill="#ededed"/><rect x="6.4" y="6.4" width="2.5" height="2.5" fill="#ededed"/><rect x="6.4" y="9.5" width="2.5" height="2.5" fill="#ededed"/><rect x="9.5" y="0.2" width="2.5" height="2.5" fill="#ededed"/><rect x="9.5" y="3.3000000000000003" width="2.5" height="2.5" fill="#ededed"/><rect x="9.5" y="6.4" width="2.5" height="2.5" fill="#ededed"/><rect x="9.5" y="9.5" width="2.5" height="2.5" fill="#ededed"/></svg><span class="t" id="t45" style="left:729px;top:149.0px;font-size:12.5px;color:#8e8e8e;letter-spacing:-0.279px;">Grille</span><svg class="a" style="left:779px;top:150px;" width="14" height="14" viewBox="0 0 14 14"><circle cx="7" cy="7" r="5" fill="none" stroke="#efefef" stroke-width="3.2" stroke-dasharray="5.4 2.45" stroke-dashoffset="2.7"/></svg><span class="t" id="t46" style="left:798px;top:149.0px;font-size:12.5px;color:#8e8e8e;letter-spacing:-0.380px;">Circulaire</span><span class="t" id="t47" style="left:619px;top:173.0px;font-size:12.5px;color:#9c9c9c;font-weight:700;letter-spacing:-0.652px;">Aligner</span><svg class="a" style="left:641px;top:201px;" width="14" height="14" viewBox="0 0 14 14"><rect x=".6" y=".6" width="12.8" height="12.8" fill="none" stroke="#17a317" stroke-width="1.1" stroke-dasharray="1.6 1.2"/><rect x="3" y="3" width="8.4" height="8.4" fill="#f0f0f0"/></svg><span class="t" id="t48" style="left:669px;top:200.5px;font-size:12.5px;color:#adadad;letter-spacing:-0.312px;">Troisième clic pour les poignées d'alignement</span><svg class="a" style="left:641px;top:235px;" width="14" height="14" viewBox="0 0 14 14"><rect x="3" y="2.4" width="8" height="2.2" fill="#f0f0f0"/><rect x="5" y="6" width="8" height="2.2" fill="#f0f0f0"/><rect x="3" y="9.6" width="7" height="2.2" fill="#f0f0f0"/><g fill="#17a317"><rect x="0" y="0" width="1.6" height="1.6"/><rect x="12.4" y="0" width="1.6" height="1.6"/><rect x="0" y="12.4" width="1.6" height="1.6"/><rect x="12.4" y="12.4" width="1.6" height="1.6"/></g></svg><span class="t" id="t49" style="left:669px;top:234.0px;font-size:12.5px;color:#adadad;letter-spacing:-0.246px;">Bouger/aligner la sélection en groupe</span><span class="t" id="t50" style="left:631px;top:268.0px;font-size:12.5px;color:#adadad;letter-spacing:-0.458px;">Relativement à :</span><div class="a sb" style="left:718px;top:260px;width:133px;height:33px;border-radius:6px"></div><span class="t" id="t51" style="left:725px;top:268.0px;font-size:12.5px;color:#adadad;letter-spacing:-0.393px;">Premier sélectionné</span><svg class="a" style="left:832px;top:273px;" width="12" height="7" viewBox="0 0 12 7"><path d="M0 0 H11.6 L5.8 6.4z" fill="#a8a8a8"/></svg><svg class="a" style="left:640px;top:302px;" width="16" height="16" viewBox="0 0 16 16"><rect x="1" y="2" width="9.6" height="3.2" fill="#f0f0f0"/><rect x="3" y="6.4" width="7.6" height="3.2" fill="#f0f0f0"/><rect x="2" y="10.8" width="8.6" height="3.2" fill="#f0f0f0"/><path d="M11.6 0 L11.6 16" stroke="#17a317" stroke-width="1.1" fill="none"/><rect x="13.4" y="1" width="1" height="1" fill="#17a317"/></svg><svg class="a" style="left:674px;top:302px;" width="16" height="16" viewBox="0 0 16 16"><path d="M1.4 0 L1.4 16" stroke="#17a317" stroke-width="1.1" fill="none"/><rect x="3" y="2" width="9" height="3.2" fill="#f0f0f0"/><rect x="3" y="6.4" width="7.4" height="3.2" fill="#f0f0f0"/><rect x="3" y="10.8" width="8.4" height="3.2" fill="#f0f0f0"/></svg><svg class="a" style="left:709px;top:302px;" width="16" height="16" viewBox="0 0 16 16"><rect x="1" y="2" width="13" height="3.2" fill="#f0f0f0"/><rect x="3" y="6.4" width="9" height="3.2" fill="#f0f0f0"/><rect x="1.6" y="10.8" width="11.8" height="3.2" fill="#f0f0f0"/><path d="M7.6 0 L7.6 16" stroke="#17a317" stroke-width="1.1" fill="none"/><path d="M7.6 0 L7.6 16" stroke="#303030" stroke-width="2.6" opacity="1" fill="none"/><path d="M7.6 0 L7.6 16" stroke="#17a317" stroke-width="1.1" fill="none"/></svg><svg class="a" style="left:743px;top:302px;" width="16" height="16" viewBox="0 0 16 16"><rect x="4" y="2" width="8.4" height="3.2" fill="#f0f0f0"/><rect x="6" y="6.4" width="6.4" height="3.2" fill="#f0f0f0"/><rect x="5" y="10.8" width="7.4" height="3.2" fill="#f0f0f0"/><path d="M13.6 0 L13.6 16" stroke="#17a317" stroke-width="1.1" fill="none"/></svg><svg class="a" style="left:776px;top:302px;" width="16" height="16" viewBox="0 0 16 16"><rect x="1" y="1" width="1" height="1" fill="#17a317"/><path d="M4.6 0 L4.6 16" stroke="#17a317" stroke-width="1.1" fill="none"/><rect x="6.2" y="2" width="9" height="3.2" fill="#f0f0f0"/><rect x="6.2" y="6.4" width="7.4" height="3.2" fill="#f0f0f0"/><rect x="6.2" y="10.8" width="8.4" height="3.2" fill="#f0f0f0"/></svg><svg class="a" style="left:810px;top:302px;" width="16" height="16" viewBox="0 0 16 16"><path d="M3.6 0 L3.6 15.4" stroke="#17a317" stroke-width="1.1" fill="none"/><text x="4" y="6.6" font-size="8.5" font-weight="700" fill="#f0f0f0" font-family="Liberation Serif,serif">a</text><text x="3.6" y="13.6" font-size="12" font-weight="700" font-style="italic" fill="#f0f0f0" font-family="Liberation Serif,serif">y</text></svg><svg class="a" style="left:640px;top:336px;" width="16" height="16" viewBox="0 0 16 16"><rect x="3" y="1.4" width="2.8" height="8.6" fill="#f0f0f0"/><rect x="6.8" y="3" width="2.8" height="7" fill="#f0f0f0"/><rect x="10.6" y="1" width="3" height="9" fill="#f0f0f0"/><path d="M0 11.4 L16 11.4" stroke="#17a317" stroke-width="1.1" fill="none"/><rect x="13.4" y="13.6" width="1" height="1" fill="#17a317"/></svg><svg class="a" style="left:674px;top:336px;" width="16" height="16" viewBox="0 0 16 16"><path d="M0 1.2 L16 1.2" stroke="#17a317" stroke-width="1.1" fill="none"/><rect x="3" y="3" width="2.8" height="7.6" fill="#f0f0f0"/><rect x="6.8" y="3" width="2.8" height="6.4" fill="#f0f0f0"/><rect x="10.6" y="3" width="3" height="9" fill="#f0f0f0"/></svg><svg class="a" style="left:708px;top:336px;" width="16" height="16" viewBox="0 0 16 16"><rect x="3" y="2" width="2.8" height="12.4" fill="#f0f0f0"/><rect x="6.8" y="4" width="2.8" height="8.6" fill="#f0f0f0"/><rect x="10.6" y="2" width="3" height="12.8" fill="#f0f0f0"/><path d="M0 8.4 L16 8.4" stroke="#303030" stroke-width="2.6" fill="none"/><path d="M0 8.4 L16 8.4" stroke="#17a317" stroke-width="1.1" fill="none"/></svg><svg class="a" style="left:742px;top:336px;" width="16" height="16" viewBox="0 0 16 16"><rect x="3" y="4" width="2.8" height="8.6" fill="#f0f0f0"/><rect x="6.8" y="5.6" width="2.8" height="7" fill="#f0f0f0"/><rect x="10.6" y="4" width="3" height="8.6" fill="#f0f0f0"/><path d="M0 14 L16 14" stroke="#17a317" stroke-width="1.1" fill="none"/></svg><svg class="a" style="left:776px;top:336px;" width="16" height="16" viewBox="0 0 16 16"><rect x="13.4" y="0.8" width="1" height="1" fill="#17a317"/><path d="M0 4.4 L16 4.4" stroke="#17a317" stroke-width="1.1" fill="none"/><rect x="3" y="6" width="2.8" height="7.6" fill="#f0f0f0"/><rect x="6.8" y="6" width="2.8" height="6.4" fill="#f0f0f0"/><rect x="10.6" y="6" width="3" height="8.6" fill="#f0f0f0"/></svg><svg class="a" style="left:809px;top:336px;" width="17" height="16" viewBox="0 0 17 16"><path d="M0 10.2 L17 10.2" stroke="#17a317" stroke-width="1.1" fill="none"/><text x="1.4" y="9.6" font-size="12" font-weight="700" font-style="italic" fill="#f0f0f0" font-family="Liberation Serif,serif">y</text><text x="8.6" y="9.6" font-size="10.5" font-weight="700" fill="#f0f0f0" font-family="Liberation Sans,sans-serif">a</text></svg><span class="t" id="t52" style="left:619px;top:372.0px;font-size:12.5px;color:#9c9c9c;font-weight:700;letter-spacing:-0.405px;">Distribuer</span><svg class="a" style="left:640px;top:398px;" width="16" height="16" viewBox="0 0 16 16"><path d="M2.4 1 L2.4 6" stroke="#17a317" stroke-width="1.1" fill="none"/><path d="M9.4 1 L9.4 6" stroke="#17a317" stroke-width="1.1" fill="none"/><rect x="1.6" y="6.6" width="5.2" height="9.4" fill="#f0f0f0"/><rect x="9.2" y="6.6" width="5" height="6.2" fill="#f0f0f0"/></svg><svg class="a" style="left:674px;top:398px;" width="16" height="16" viewBox="0 0 16 16"><path d="M4.4 1 L4.4 6" stroke="#17a317" stroke-width="1.1" fill="none"/><path d="M11.5 1 L11.5 6" stroke="#17a317" stroke-width="1.1" fill="none"/><rect x="2" y="6.6" width="5" height="9.4" fill="#f0f0f0"/><rect x="9.4" y="6.6" width="4.8" height="6.2" fill="#f0f0f0"/></svg><svg class="a" style="left:708px;top:398px;" width="16" height="16" viewBox="0 0 16 16"><path d="M6.8 1 L6.8 6" stroke="#17a317" stroke-width="1.1" fill="none"/><path d="M13.5 1 L13.5 6" stroke="#17a317" stroke-width="1.1" fill="none"/><rect x="2" y="6.6" width="5" height="6.2" fill="#f0f0f0"/><rect x="8.8" y="6.6" width="5" height="9.4" fill="#f0f0f0"/></svg><svg class="a" style="left:741px;top:398px;" width="16" height="16" viewBox="0 0 16 16"><rect x="0.8" y="6.6" width="3" height="8.4" fill="#f0f0f0"/><rect x="7.4" y="6.6" width="3.6" height="6.2" fill="#f0f0f0"/><rect x="14" y="6.6" width="3" height="9.4" fill="#f0f0f0"/><path d="M3.4 3.4 L7.4 3.4" stroke="#17a317" stroke-width="1.1" fill="none"/><path d="M11 3.4 L14.4 3.4" stroke="#17a317" stroke-width="1.1" fill="none"/><path d="M3.4 2 L3.4 4.8" stroke="#17a317" stroke-width="1.1" fill="none"/><path d="M7.4 2 L7.4 4.8" stroke="#17a317" stroke-width="1.1" fill="none"/><path d="M11 2 L11 4.8" stroke="#17a317" stroke-width="1.1" fill="none"/><path d="M14.4 2 L14.4 4.8" stroke="#17a317" stroke-width="1.1" fill="none"/></svg><svg class="a" style="left:776px;top:398px;" width="16" height="16" viewBox="0 0 16 16"><path d="M1 3.4 L10 3.4" stroke="#17a317" stroke-width="1.1" fill="none"/><path d="M1 2 L1 4.8" stroke="#17a317" stroke-width="1.1" fill="none"/><path d="M10 2 L10 4.8" stroke="#17a317" stroke-width="1.1" fill="none"/><text x="1" y="13" font-size="10.5" font-weight="700" fill="#f0f0f0" font-family="Liberation Sans,sans-serif">a</text><text x="8" y="13" font-size="12.5" font-weight="700" font-style="italic" fill="#f0f0f0" font-family="Liberation Serif,serif">y</text></svg><svg class="a" style="left:640px;top:433px;" width="16" height="16" viewBox="0 0 16 16"><path d="M0 2.4 L4.8 2.4" stroke="#17a317" stroke-width="1.1" fill="none"/><path d="M0 9.4 L4.8 9.4" stroke="#17a317" stroke-width="1.1" fill="none"/><rect x="6.4" y="2.2" width="8.6" height="4.6" fill="#f0f0f0"/><rect x="6.4" y="9" width="5.8" height="4.8" fill="#f0f0f0"/></svg><svg class="a" style="left:674px;top:433px;" width="16" height="16" viewBox="0 0 16 16"><path d="M0 4.4 L4.6 4.4" stroke="#17a317" stroke-width="1.1" fill="none"/><path d="M0 11.4 L4.6 11.4" stroke="#17a317" stroke-width="1.1" fill="none"/><rect x="6.4" y="2.2" width="8.6" height="4.6" fill="#f0f0f0"/><rect x="6.4" y="9" width="5.4" height="4.8" fill="#f0f0f0"/></svg><svg class="a" style="left:708px;top:433px;" width="16" height="16" viewBox="0 0 16 16"><path d="M0 6.6 L4.6 6.6" stroke="#17a317" stroke-width="1.1" fill="none"/><path d="M0 13.6 L4.6 13.6" stroke="#17a317" stroke-width="1.1" fill="none"/><rect x="6" y="2.2" width="5.8" height="4.6" fill="#f0f0f0"/><rect x="6" y="9" width="9.2" height="4.8" fill="#f0f0f0"/></svg><svg class="a" style="left:742px;top:433px;" width="16" height="16" viewBox="0 0 16 16"><rect x="6" y="0.4" width="9" height="2.8" fill="#f0f0f0"/><rect x="6" y="6" width="5.6" height="3.8" fill="#f0f0f0"/><rect x="6" y="12.8" width="8" height="2.8" fill="#f0f0f0"/><path d="M2.4 2.4 L2.4 6.6" stroke="#17a317" stroke-width="1.1" fill="none"/><path d="M1 2.4 L3.8 2.4" stroke="#17a317" stroke-width="1.1" fill="none"/><path d="M1 6.6 L3.8 6.6" stroke="#17a317" stroke-width="1.1" fill="none"/><path d="M2.4 9.4 L2.4 13.4" stroke="#17a317" stroke-width="1.1" fill="none"/><path d="M1 9.4 L3.8 9.4" stroke="#17a317" stroke-width="1.1" fill="none"/><path d="M1 13.4 L3.8 13.4" stroke="#17a317" stroke-width="1.1" fill="none"/></svg><svg class="a" style="left:776px;top:433px;" width="16" height="16" viewBox="0 0 16 16"><path d="M2.6 5.4 L2.6 14.6" stroke="#17a317" stroke-width="1.1" fill="none"/><path d="M0 5.4 L5.4 5.4" stroke="#17a317" stroke-width="1.1" fill="none"/><path d="M0 14.6 L5.4 14.6" stroke="#17a317" stroke-width="1.1" fill="none"/><text x="9" y="6" font-size="9" font-weight="700" fill="#f0f0f0" font-family="Liberation Sans,sans-serif">a</text><text x="8" y="14.4" font-size="12.5" font-weight="700" font-style="italic" fill="#f0f0f0" font-family="Liberation Serif,serif">y</text></svg><span class="t" id="t53" style="left:619px;top:469.0px;font-size:12.5px;color:#9c9c9c;font-weight:700;letter-spacing:-0.674px;">Organiser</span><svg class="a" style="left:640px;top:496px;" width="16" height="16" viewBox="0 0 16 16"><path d="M3 4.6 L4.4 1.6 L8.6 2.4 L9.6 7 L5.8 9.6z M9.6 7 L12.6 11.6 L7.4 13.6 L5.8 9.6" fill="none" stroke="#f0f0f0" stroke-width=".9"/><circle cx="3" cy="4.6" r="1.3" fill="#f0f0f0"/><circle cx="4.4" cy="1.6" r="1.3" fill="#f0f0f0"/><circle cx="8.6" cy="2.4" r="1.3" fill="#f0f0f0"/><circle cx="9.6" cy="7" r="1.3" fill="#f0f0f0"/><circle cx="5.8" cy="9.6" r="1.3" fill="#f0f0f0"/><circle cx="12.6" cy="11.6" r="1.3" fill="#f0f0f0"/><circle cx="7.4" cy="13.6" r="1.3" fill="#f0f0f0"/></svg><svg class="a" style="left:674px;top:496px;" width="16" height="16" viewBox="0 0 16 16"><rect x="1" y="0.6" width="5" height="5" fill="#f0f0f0"/><rect x="9.4" y="8.6" width="5.4" height="5.4" fill="#f0f0f0"/><path d="M8 2 Q11 2 11.4 5.6 M8 2 l2 -1.8 M8 2 l2 1.8 M11.4 6.4 l-1.8 -1.8 M11.4 6.4 l1.8 -1.8" stroke="#f0f0f0" stroke-width="1.1" fill="none"/><path d="M1.6 7.6 L2 15.4 L4 13.4 L5.6 15.8 L6.4 15.2 L5 12.8 L7.6 12.4z" fill="#1a93ea"/></svg><svg class="a" style="left:708px;top:496px;" width="16" height="16" viewBox="0 0 16 16"><rect x="1" y="0.6" width="5" height="5" fill="#f0f0f0"/><rect x="9.4" y="8.6" width="5.4" height="5.4" fill="#f0f0f0"/><path d="M8 2 Q11 2 11.4 5.6 M8 2 l2 -1.8 M8 2 l2 1.8 M11.4 6.4 l-1.8 -1.8 M11.4 6.4 l1.8 -1.8" stroke="#f0f0f0" stroke-width="1.1" fill="none"/><path d="M1 8.6 H7 M2.6 11.2 H7 M4 13.8 H7.4" stroke="#1a93ea" stroke-width="1.2"/></svg><svg class="a" style="left:742px;top:496px;" width="16" height="16" viewBox="0 0 16 16"><rect x="1" y="0.6" width="5" height="5" fill="#f0f0f0"/><rect x="9.4" y="8.6" width="5.4" height="5.4" fill="#f0f0f0"/><path d="M8 2 Q11 2 11.4 5.6 M8 2 l2 -1.8 M8 2 l2 1.8 M11.4 6.4 l-1.8 -1.8 M11.4 6.4 l1.8 -1.8" stroke="#f0f0f0" stroke-width="1.1" fill="none"/><path d="M6.6 11.6 A2.8 2.8 0 1 1 3.8 8.8 M1.2 11.6 A2.8 2.8 0 0 0 6.6 12.6" fill="none" stroke="#1a93ea" stroke-width="1"/></svg><svg class="a" style="left:776px;top:496px;" width="16" height="16" viewBox="0 0 16 16"><rect x="5.4" y="0" width="3.6" height="2.8" fill="#f0f0f0"/><rect x="10" y="0.4" width="3.6" height="2.8" fill="#f0f0f0"/><rect x="1.4" y="3.4" width="3.6" height="2.8" fill="#f0f0f0"/><rect x="6" y="4.2" width="3.6" height="2.8" fill="#f0f0f0"/><rect x="10.8" y="3.8" width="3.6" height="2.8" fill="#f0f0f0"/><rect x="1" y="7.4" width="3.6" height="2.8" fill="#f0f0f0"/><rect x="5.6" y="8.4" width="3.6" height="2.8" fill="#f0f0f0"/><rect x="10" y="7.8" width="3.6" height="2.8" fill="#f0f0f0"/><rect x="5" y="12" width="3.6" height="2.8" fill="#f0f0f0"/></svg><svg class="a" style="left:810px;top:496px;" width="16" height="16" viewBox="0 0 16 16"><rect x="0" y="5.6" width="4" height="3" fill="#f0f0f0"/><rect x="10.4" y="0.6" width="4" height="3" fill="#f0f0f0"/><rect x="10.4" y="11.4" width="4" height="3" fill="#f0f0f0"/><path d="M4 7 L10.4 2.4 M4 7.4 L10.4 12.4 M12.4 5 V10" stroke="#f0f0f0" stroke-width=".9" stroke-dasharray="2.4 1.2"/></svg><span class="t" id="t54" style="left:619px;top:531.5px;font-size:12.5px;color:#9c9c9c;font-weight:700;letter-spacing:-0.689px;">Supprimer les chevauchements</span><span class="t" id="t55" style="left:631px;top:559.0px;font-size:12.5px;color:#909090;letter-spacing:-0.661px;">H :</span><div class="a sb" style="left:646px;top:550px;width:88px;height:34px;border-radius:6px"></div><div class="a" style="left:683.5px;top:551px;width:1px;height:32px;background:#262626;"></div><div class="a" style="left:708.5px;top:551px;width:1px;height:32px;background:#262626;"></div><span class="t" id="t56" style="left:653px;top:559.0px;font-size:12.5px;color:#c8c8c8;">0</span><svg class="a" style="left:689px;top:560px;" width="14" height="14" viewBox="0 0 14 14"><path d="M0 7 H14" stroke="#9a9a9a" stroke-width="1.5"/></svg><svg class="a" style="left:714px;top:560px;" width="14" height="14" viewBox="0 0 14 14"><path d="M0 7 H14 M7 0 V14" stroke="#9a9a9a" stroke-width="1.5"/></svg><span class="t" id="t57" style="left:738px;top:559.0px;font-size:12.5px;color:#909090;letter-spacing:-1.312px;">_V :</span><div class="a sb" style="left:756px;top:550px;width:88px;height:34px;border-radius:6px"></div><div class="a" style="left:793.5px;top:551px;width:1px;height:32px;background:#262626;"></div><div class="a" style="left:818.5px;top:551px;width:1px;height:32px;background:#262626;"></div><span class="t" id="t58" style="left:763px;top:559.0px;font-size:12.5px;color:#c8c8c8;">0</span><svg class="a" style="left:799px;top:560px;" width="14" height="14" viewBox="0 0 14 14"><path d="M0 7 H14" stroke="#9a9a9a" stroke-width="1.5"/></svg><svg class="a" style="left:824px;top:560px;" width="14" height="14" viewBox="0 0 14 14"><path d="M0 7 H14 M7 0 V14" stroke="#9a9a9a" stroke-width="1.5"/></svg><svg class="a" style="left:858px;top:560px;" width="15" height="14" viewBox="0 0 15 14"><rect x="0" y="4" width="3.2" height="10" fill="#fff"/><rect x="0" y="0" width="3.2" height="2.6" fill="#fff"/><rect x="5.2" y="0" width="3.2" height="14" fill="#fff"/><rect x="10.4" y="0" width="3.2" height="14" fill="#fff"/></svg><svg class="a" style="left:998px;top:112px;" width="16" height="16" viewBox="0 0 16 16"><path d="M1 1 H8 L11.4 4.4 V14.6 H1z" fill="none" stroke="#f0f0f0" stroke-width="1.9" stroke-linejoin="round"/><path d="M12.6 -1.4 l1 2.2 2.4.3 -1.8 1.6 .5 2.4 -2.1-1.2 -2.1 1.2 .5-2.4 -1.8-1.6 2.4-.3z" fill="#12a012"/></svg><svg class="a" style="left:998px;top:146.5px;" width="16" height="16" viewBox="0 0 16 16"><path d="M0 14.6 V1 H6 L7.6 3.2 H13 V6 H4 L0 14.6" fill="#f0f0f0"/><path d="M4.6 7 H16.6 L13.6 14.6 H1z" fill="#f0f0f0"/></svg><svg class="a" style="left:998px;top:181px;" width="16" height="16" viewBox="0 0 16 16"><path d="M1 16 V11 L3.6 7.4 H12.4 L15 11 V16z" fill="#f0f0f0"/><path d="M3.4 10.6 H12.6" stroke="#353535" stroke-width="1.4"/><rect x="5.4" y="12.4" width="5.2" height="1.4" fill="#353535"/><path d="M8 0 V6 M4.8 3.6 L8 7 L11.2 3.6" fill="none" stroke="#12a012" stroke-width="1.9"/></svg><svg class="a" style="left:998px;top:215.5px;" width="16" height="16" viewBox="0 0 16 16"><rect x="3.6" y="1.4" width="8.8" height="3" fill="#f0f0f0"/><path d="M1 5.4 H15 V11 H12.4 V9 H3.6 V11 H1z" fill="#f0f0f0"/><rect x="3.6" y="10" width="8.8" height="4.6" fill="#f0f0f0"/></svg><div class="a" style="left:988px;top:248px;width:36px;height:1px;background:#2c2c2c;"></div><svg class="a" style="left:998px;top:264.5px;" width="16" height="16" viewBox="0 0 16 16"><path d="M4.6 5 V1 H10.6 L14 4.4 V14.6 H4.6 V11" fill="none" stroke="#f0f0f0" stroke-width="1.9" stroke-linejoin="round"/><path d="M0 8 H8 M5.4 4.8 L9 8 L5.4 11.2" fill="none" stroke="#12a012" stroke-width="1.9"/></svg><svg class="a" style="left:998px;top:299.5px;" width="16" height="16" viewBox="0 0 16 16"><path d="M9 14.6 H1 V1 H8 L11.4 4.4 V6" fill="none" stroke="#f0f0f0" stroke-width="1.9" stroke-linejoin="round"/><path d="M7 9 H15 M12.4 5.8 L16 9 L12.4 12.2" fill="none" stroke="#12a012" stroke-width="1.9"/></svg><div class="a" style="left:988px;top:332px;width:36px;height:1px;background:#2c2c2c;"></div><svg class="a" style="left:999px;top:349px;" width="16" height="16" viewBox="0 0 16 16"><path d="M2.6 5 H9.6 Q13.4 5.4 13.4 9 Q13.2 12.6 9 12.6 H8" fill="none" stroke="#f0f0f0" stroke-width="1.9"/><path d="M5.6 1.2 L1.6 5 L5.6 8.8" fill="none" stroke="#f0f0f0" stroke-width="1.9"/></svg><svg class="a" style="left:999px;top:384px;" width="16" height="16" viewBox="0 0 16 16"><path d="M12 5 H5 Q1.2 5.4 1.2 9 Q1.4 12.6 5.6 12.6 H6.6" fill="none" stroke="#787878" stroke-width="1.9"/><path d="M9 1.2 L13 5 L9 8.8" fill="none" stroke="#787878" stroke-width="1.9"/></svg><div class="a" style="left:988px;top:416px;width:36px;height:1px;background:#2c2c2c;"></div><svg class="a" style="left:998px;top:433px;" width="16" height="16" viewBox="0 0 16 16"><rect x="0" y="0" width="10.6" height="10.6" fill="#f0f0f0"/><rect x="4.4" y="4.6" width="12" height="11.6" fill="#353535"/><rect x="5.6" y="5.8" width="10.6" height="10.4" fill="#f0f0f0"/></svg><svg class="a" style="left:998px;top:468.5px;" width="16" height="16" viewBox="0 0 16 16"><path d="M3 0 L11.6 11.4 M13 0 L4.4 11.4" stroke="#f0f0f0" stroke-width="1.9"/><circle cx="3.4" cy="12.8" r="2.5" fill="none" stroke="#f0f0f0" stroke-width="1.7"/><circle cx="12.6" cy="12.8" r="2.5" fill="none" stroke="#f0f0f0" stroke-width="1.7"/></svg><svg class="a" style="left:998px;top:503.5px;" width="16" height="16" viewBox="0 0 16 16"><rect x=".8" y="2" width="13.6" height="13" fill="none" stroke="#f0f0f0" stroke-width="1.5"/><rect x="4.6" y="0" width="6" height="3" fill="#f0f0f0"/><path d="M3.6 5 H11.6 V10.6 L9.4 12.8 H3.6z" fill="#f0f0f0"/></svg><div class="a" style="left:988px;top:536px;width:36px;height:1px;background:#2c2c2c;"></div><svg class="a" style="left:998px;top:552px;" width="16" height="16" viewBox="0 0 16 16"><circle cx="7" cy="7" r="6.8" fill="#f0f0f0"/><path d="M11.4 11.6 L15 15.2" stroke="#f0f0f0" stroke-width="2.4" stroke-linecap="round"/><rect x="3.6" y="3.6" width="6.8" height="6.8" fill="none" stroke="#353535" stroke-width="1" stroke-dasharray="1 1"/></svg><svg class="a" style="left:998px;top:587px;" width="16" height="16" viewBox="0 0 16 16"><circle cx="7" cy="7" r="6.8" fill="#f0f0f0"/><path d="M11.4 11.6 L15 15.2" stroke="#f0f0f0" stroke-width="2.4" stroke-linecap="round"/><circle cx="5.8" cy="5.6" r="2.6" fill="#353535"/><rect x="5.4" y="6" width="5" height="4.6" fill="#353535" stroke="#f0f0f0" stroke-width=".7"/></svg><svg class="a" style="left:998px;top:622px;" width="16" height="16" viewBox="0 0 16 16"><circle cx="7" cy="7" r="6.8" fill="#f0f0f0"/><path d="M11.4 11.6 L15 15.2" stroke="#f0f0f0" stroke-width="2.4" stroke-linecap="round"/><path d="M4 2.6 H9 L10.4 4 V11.4 H4z" fill="none" stroke="#353535" stroke-width="1.3"/></svg><svg class="a" style="left:998.5px;top:657px;" width="16" height="16" viewBox="0 0 16 16"><rect x="3" y="3" width="10" height="10" fill="none" stroke="#f0f0f0" stroke-width="1.3"/><path d="M5.6 8 H10.4 M8 5.6 V10.4" stroke="#f0f0f0" stroke-width="1.2"/><path d="M.6 3 V.6 H3 M13 .6 H15.4 V3 M15.4 13 V15.4 H13 M3 15.4 H.6 V13" fill="none" stroke="#9a9a9a" stroke-width=".8"/></svg><div class="a" style="left:988px;top:689px;width:36px;height:1px;background:#2c2c2c;"></div><svg class="a" style="left:998px;top:706.5px;" width="16" height="16" viewBox="0 0 16 16"><rect x="0" y="0" width="9.6" height="9.4" fill="#f0f0f0"/><rect x="4" y="3.8" width="12" height="12" fill="#353535"/><rect x="5" y="4.8" width="10.6" height="10" fill="#0d960d"/></svg><svg class="a" style="left:998px;top:741.5px;" width="16" height="16" viewBox="0 0 16 16"><rect x="0" y="0" width="9.6" height="9.4" fill="#f0f0f0"/><rect x="4" y="3.8" width="12" height="12.4" fill="#353535"/><rect x="5" y="4.8" width="10.6" height="11" fill="#f0f0f0"/><rect x="7.6" y="10" width="5.6" height="4.4" fill="#353535"/><path d="M8.8 10 V8.6 A1.6 1.6 0 0 1 12 8.6 V10" fill="none" stroke="#353535" stroke-width="1.1"/></svg><svg class="a" style="left:998px;top:776px;" width="16" height="16" viewBox="0 0 16 16"><rect x="0" y="0" width="9.6" height="9.4" fill="#f0f0f0"/><rect x="4" y="3.8" width="12" height="12.4" fill="#353535"/><rect x="5" y="4.8" width="10.6" height="11" fill="#f0f0f0"/><rect x="7.2" y="10" width="5.6" height="4.4" fill="#353535"/><path d="M11.4 10 V8 A1.4 1.4 0 0 1 14.2 8 V8.6" fill="none" stroke="#353535" stroke-width="1.1"/></svg><div class="a" style="left:988px;top:809px;width:36px;height:1px;background:#2c2c2c;"></div><svg class="a" style="left:998px;top:825px;" width="16" height="16" viewBox="0 0 16 16"><circle cx="6" cy="6.6" r="4" fill="#f0f0f0"/><path d="M7 13 H13 V7 Q12 12 7 13z" fill="#f0f0f0"/><path d="M9.4 8.6 L13 8 V13 H8z" fill="#bdbdbd"/><rect x="0" y="0" width="2.6" height="2.6" fill="#0fa80f"/><rect x="0" y="13" width="2.6" height="2.6" fill="#0fa80f"/><rect x="13.2" y="0" width="2.6" height="2.6" fill="#0fa80f"/><rect x="13.2" y="13" width="2.6" height="2.6" fill="#0fa80f"/></svg><svg class="a" style="left:998px;top:860px;" width="16" height="16" viewBox="0 0 16 16"><circle cx="6" cy="6.6" r="4" fill="#f0f0f0"/><path d="M7 13 H13 V7 Q12 12 7 13z" fill="#f0f0f0"/><path d="M9.4 8.6 L13 8 V13 H8z" fill="#bdbdbd"/><rect x="0" y="0" width="2.6" height="2.6" fill="#ffffff"/><rect x="0" y="13" width="2.6" height="2.6" fill="#ffffff"/><rect x="13.2" y="0" width="2.6" height="2.6" fill="#ffffff"/><rect x="13.2" y="13" width="2.6" height="2.6" fill="#ffffff"/></svg><div class="a" style="left:988px;top:892px;width:36px;height:1px;background:#2c2c2c;"></div><svg class="a" style="left:998px;top:903px;" width="17" height="21" viewBox="0 0 17 21"><path d="M.8 15 V.8 H14" fill="none" stroke="#f0f0f0" stroke-width="1.1"/><path d="M16.4 3 L8.4 12.6 L6.8 11.2 L15 2z" fill="#f0f0f0"/><path d="M7.2 11.8 L5.8 13.4" stroke="#f0f0f0" stroke-width="1.8"/><path d="M5.2 13 L6.6 14.4 Q4.4 17.6 .6 18.4 Q3.6 16 5.2 13z" fill="#1a93ea"/></svg><svg class="a" style="left:1003px;top:949px;" width="7" height="13" viewBox="0 0 7 13"><path d="M0 0 V12.6 L6.4 6.3z" fill="#ececec"/></svg><div class="a" style="left:1028px;top:1px;width:1px;height:30px;background:#3c3c3c;"></div><div class="a" style="left:1028px;top:31px;width:1px;height:74px;background:#4c4c4c;"></div><div class="a" style="left:1028px;top:105px;width:1px;height:143px;background:#6c6c6c;"></div><div class="a" style="left:1028px;top:248px;width:1px;height:760px;background:#242424;"></div><div class="a" style="left:1px;top:972px;width:1027px;height:15px;background:#353535;"></div><svg class="a" style="left:0px;top:987px;" width="940" height="16" viewBox="0 0 940 16"><rect x="2" y="0" width="16" height="16" fill="#ffffff"/><path d="M2.8 .8 L17.2 15.2 M17.2 .8 L2.8 15.2" stroke="#b01818" stroke-width="1.5"/><rect x="19" y="0" width="16" height="16" fill="#000000"/><rect x="36" y="0" width="16" height="16" fill="#1a1a1a"/><rect x="53" y="0" width="16" height="16" fill="#333333"/><rect x="70" y="0" width="16" height="16" fill="#4d4d4d"/><rect x="87" y="0" width="16" height="16" fill="#666666"/><rect x="104" y="0" width="16" height="16" fill="#808080"/><rect x="121" y="0" width="16" height="16" fill="#999999"/><rect x="138" y="0" width="16" height="16" fill="#b3b3b3"/><rect x="155" y="0" width="16" height="16" fill="#cccccc"/><rect x="172" y="0" width="16" height="16" fill="#e6e6e6"/><rect x="189" y="0" width="16" height="16" fill="#ececec"/><rect x="206" y="0" width="16" height="16" fill="#f2f2f2"/><rect x="223" y="0" width="16" height="16" fill="#f9f9f9"/><rect x="240" y="0" width="16" height="16" fill="#ffffff"/><rect x="257" y="0" width="16" height="16" fill="#800000"/><rect x="274" y="0" width="16" height="16" fill="#ff0000"/><rect x="291" y="0" width="16" height="16" fill="#808000"/><rect x="308" y="0" width="16" height="16" fill="#ffff00"/><rect x="325" y="0" width="16" height="16" fill="#008000"/><rect x="342" y="0" width="16" height="16" fill="#00ff00"/><rect x="359" y="0" width="16" height="16" fill="#008080"/><rect x="376" y="0" width="16" height="16" fill="#00ffff"/><rect x="393" y="0" width="16" height="16" fill="#000080"/><rect x="410" y="0" width="16" height="16" fill="#0000ff"/><rect x="427" y="0" width="16" height="16" fill="#800080"/><rect x="444" y="0" width="16" height="16" fill="#ff00ff"/><rect x="461" y="0" width="16" height="16" fill="#2b0000"/><rect x="478" y="0" width="16" height="16" fill="#550000"/><rect x="495" y="0" width="16" height="16" fill="#800000"/><rect x="512" y="0" width="16" height="16" fill="#aa0000"/><rect x="529" y="0" width="16" height="16" fill="#d40000"/><rect x="546" y="0" width="16" height="16" fill="#ff0000"/><rect x="563" y="0" width="16" height="16" fill="#ff2a2a"/><rect x="580" y="0" width="16" height="16" fill="#ff5555"/><rect x="597" y="0" width="16" height="16" fill="#ff8080"/><rect x="614" y="0" width="16" height="16" fill="#ffaaaa"/><rect x="631" y="0" width="16" height="16" fill="#ffd5d5"/><rect x="648" y="0" width="16" height="16" fill="#280b0b"/><rect x="665" y="0" width="16" height="16" fill="#501616"/><rect x="682" y="0" width="16" height="16" fill="#782121"/><rect x="699" y="0" width="16" height="16" fill="#a02c2c"/><rect x="716" y="0" width="16" height="16" fill="#c83737"/><rect x="733" y="0" width="16" height="16" fill="#d35f5f"/><rect x="750" y="0" width="16" height="16" fill="#de8787"/><rect x="767" y="0" width="16" height="16" fill="#e9afaf"/><rect x="784" y="0" width="16" height="16" fill="#f4d7d7"/><rect x="801" y="0" width="16" height="16" fill="#241c1c"/><rect x="818" y="0" width="16" height="16" fill="#483737"/><rect x="835" y="0" width="16" height="16" fill="#6c5353"/><rect x="852" y="0" width="16" height="16" fill="#916f6f"/><rect x="869" y="0" width="16" height="16" fill="#ac9393"/><rect x="886" y="0" width="16" height="16" fill="#c8b7b7"/><rect x="903" y="0" width="16" height="16" fill="#e3dbdb"/><rect x="920" y="0" width="16" height="16" fill="#2b1100"/></svg><svg class="a" style="left:954px;top:987px;" width="13" height="8" viewBox="0 0 13 8"><path d="M1 7 L6.4 1.6 L11.8 7" fill="none" stroke="#efefef" stroke-width="1.9"/></svg><svg class="a" style="left:985px;top:986px;" width="13" height="8" viewBox="0 0 13 8"><path d="M1 1 L6.4 6.4 L11.8 1" fill="none" stroke="#efefef" stroke-width="1.9"/></svg><div class="a" style="left:1007px;top:976px;width:20px;height:28px;border-radius:5px;background:#2d2d2d;border:1px solid #232323"></div><svg class="a" style="left:1010px;top:982px;" width="15" height="16" viewBox="0 0 15 16"><path d="M0 2 H14.4 M0 7.6 H14.4 M0 13.2 H14.4" stroke="#f2f2f2" stroke-width="2"/></svg><span class="t" id="t59" style="left:19.5px;top:1005.5px;font-size:12.5px;color:#adadad;letter-spacing:-0.490px;">Fond :</span><span class="t" id="t60" style="left:3.5px;top:1022.5px;font-size:12.5px;color:#adadad;letter-spacing:-0.325px;">Contour :</span><span class="t" id="t61" style="left:82.5px;top:1005.5px;font-size:12.5px;color:#adadad;letter-spacing:0.052px;">N/A</span><span class="t" id="t62" style="left:82.5px;top:1022.5px;font-size:12.5px;color:#adadad;letter-spacing:0.052px;">N/A</span><span class="t" id="t63" style="left:163px;top:1014.0px;font-size:12.5px;color:#9a9a9a;letter-spacing:-1.224px;">O :</span><div class="a" style="left:179px;top:1005px;width:72px;height:40px;border:1px solid #262626;border-radius:6px;background:#323232"></div><div class="a" style="left:216px;top:1006px;width:1px;height:34px;background:#2a2a2a;"></div><div class="a" style="left:233.5px;top:1006px;width:1px;height:34px;background:#2a2a2a;"></div><span class="t" id="t64" style="left:186.5px;top:1014.0px;font-size:12.5px;color:#646464;letter-spacing:-1.120px;">100</span><svg class="a" style="left:218px;top:1015px;" width="14" height="14" viewBox="0 0 14 14"><path d="M0 7 H13.6" stroke="#4c4c4c" stroke-width="1.4"/></svg><svg class="a" style="left:235.5px;top:1015px;" width="14" height="14" viewBox="0 0 14 14"><path d="M0 7 H13.6 M6.8 .2 V13.8" stroke="#4c4c4c" stroke-width="1.4"/></svg><div class="a" style="left:264px;top:1012.5px;width:3.5px;height:17.5px;background:#3b82e8;"></div><span class="t" id="t65" style="left:273.5px;top:1014.0px;font-size:12.5px;color:#adadad;letter-spacing:-0.756px;">Calque 1</span><svg class="a" style="left:338px;top:1015px;" width="16" height="14" viewBox="0 0 16 14"><path d="M1 7.6 Q8 .4 15 7.6 Q8 14 1 7.6z" fill="none" stroke="#f2f2f2" stroke-width="1.6"/><circle cx="8" cy="7.4" r="2.5" fill="#f2f2f2"/><path d="M3 3.4 L1.6 1.4 M8 2.4 V0 M13 3.4 L14.4 1.4" stroke="#f2f2f2" stroke-width="1.3"/></svg><svg class="a" style="left:376px;top:1015px;" width="15" height="15" viewBox="0 0 15 15"><rect x=".6" y="6.6" width="9.4" height="7.6" fill="#f2f2f2"/><path d="M7.6 6.8 V3.8 A2.6 2.6 0 0 1 12.8 3.8 V5.4" fill="none" stroke="#f2f2f2" stroke-width="1.7"/></svg><div class="a" style="left:400.5px;top:1008px;width:1px;height:30px;background:#2e2e2e;"></div><span class="t" id="t66" style="left:408.5px;top:1005.5px;font-size:12.5px;color:#adadad;letter-spacing:-0.397px;">Aucun objet sélectionné. Sélectionnez des objets par Clic,</span><span class="t" id="t67" style="left:408.5px;top:1022.5px;font-size:12.5px;color:#adadad;letter-spacing:-0.217px;">Shift+Clic ou Alt+molette, ou cliquez-déplacez autour de...</span><div class="a" style="left:719px;top:1008px;width:1px;height:30px;background:#2e2e2e;"></div><span class="t" id="t68" style="left:729.5px;top:1005.5px;font-size:12.5px;color:#9a9a9a;letter-spacing:-1.099px;">X :</span><span class="t" id="t69" style="left:729.5px;top:1022.5px;font-size:12.5px;color:#9a9a9a;letter-spacing:-1.021px;">Y :</span><span class="t" id="t70" style="left:756px;top:1005.5px;font-size:12.5px;color:#adadad;letter-spacing:-1.039px;">135,24</span><span class="t" id="t71" style="left:756px;top:1022.5px;font-size:12.5px;color:#adadad;letter-spacing:-0.885px;">119,93</span><span class="t" id="t72" style="left:798.5px;top:1014.0px;font-size:12.5px;color:#9a9a9a;letter-spacing:-0.865px;">Z :</span><div class="a sb" style="left:812px;top:1006px;width:86.5px;height:33px;border-radius:6px"></div><div class="a" style="left:854px;top:1007px;width:1px;height:31px;background:#262626;"></div><div class="a" style="left:875px;top:1007px;width:1px;height:31px;background:#262626;"></div><span class="t" id="t73" style="left:820px;top:1014.0px;font-size:12.5px;color:#d2d2d2;letter-spacing:-1.246px;">105%</span><svg class="a" style="left:858px;top:1015.5px;" width="14" height="14" viewBox="0 0 14 14"><path d="M0 7 H14" stroke="#9a9a9a" stroke-width="1.5"/></svg><svg class="a" style="left:879px;top:1015.5px;" width="14" height="14" viewBox="0 0 14 14"><path d="M0 7 H14 M7 0 V14" stroke="#9a9a9a" stroke-width="1.5"/></svg><span class="t" id="t74" style="left:909.5px;top:1014.0px;font-size:12.5px;color:#9a9a9a;letter-spacing:-1.328px;">R :</span><div class="a sb" style="left:922.5px;top:1006px;width:93.5px;height:33px;border-radius:6px"></div><div class="a" style="left:971.5px;top:1007px;width:1px;height:31px;background:#262626;"></div><div class="a" style="left:992px;top:1007px;width:1px;height:31px;background:#262626;"></div><span class="t" id="t75" style="left:936px;top:1014.0px;font-size:12.5px;color:#d2d2d2;letter-spacing:-0.766px;">0,00°</span><svg class="a" style="left:975.5px;top:1015.5px;" width="14" height="14" viewBox="0 0 14 14"><path d="M0 7 H14" stroke="#9a9a9a" stroke-width="1.5"/></svg><svg class="a" style="left:996px;top:1015.5px;" width="14" height="14" viewBox="0 0 14 14"><path d="M0 7 H14 M7 0 V14" stroke="#9a9a9a" stroke-width="1.5"/></svg><svg class="a" style="left:689.5px;top:16px;" width="16" height="22" viewBox="0 0 16 22"><path d="M1 1 L1 17.5 L4.8 14 L7.5 19.6 L10 18.5 L7.5 13 L12.5 12.8 Z" fill="#fff" stroke="#0a0a1a" stroke-width="1.1" stroke-linejoin="miter"/></svg>
</body></html>
